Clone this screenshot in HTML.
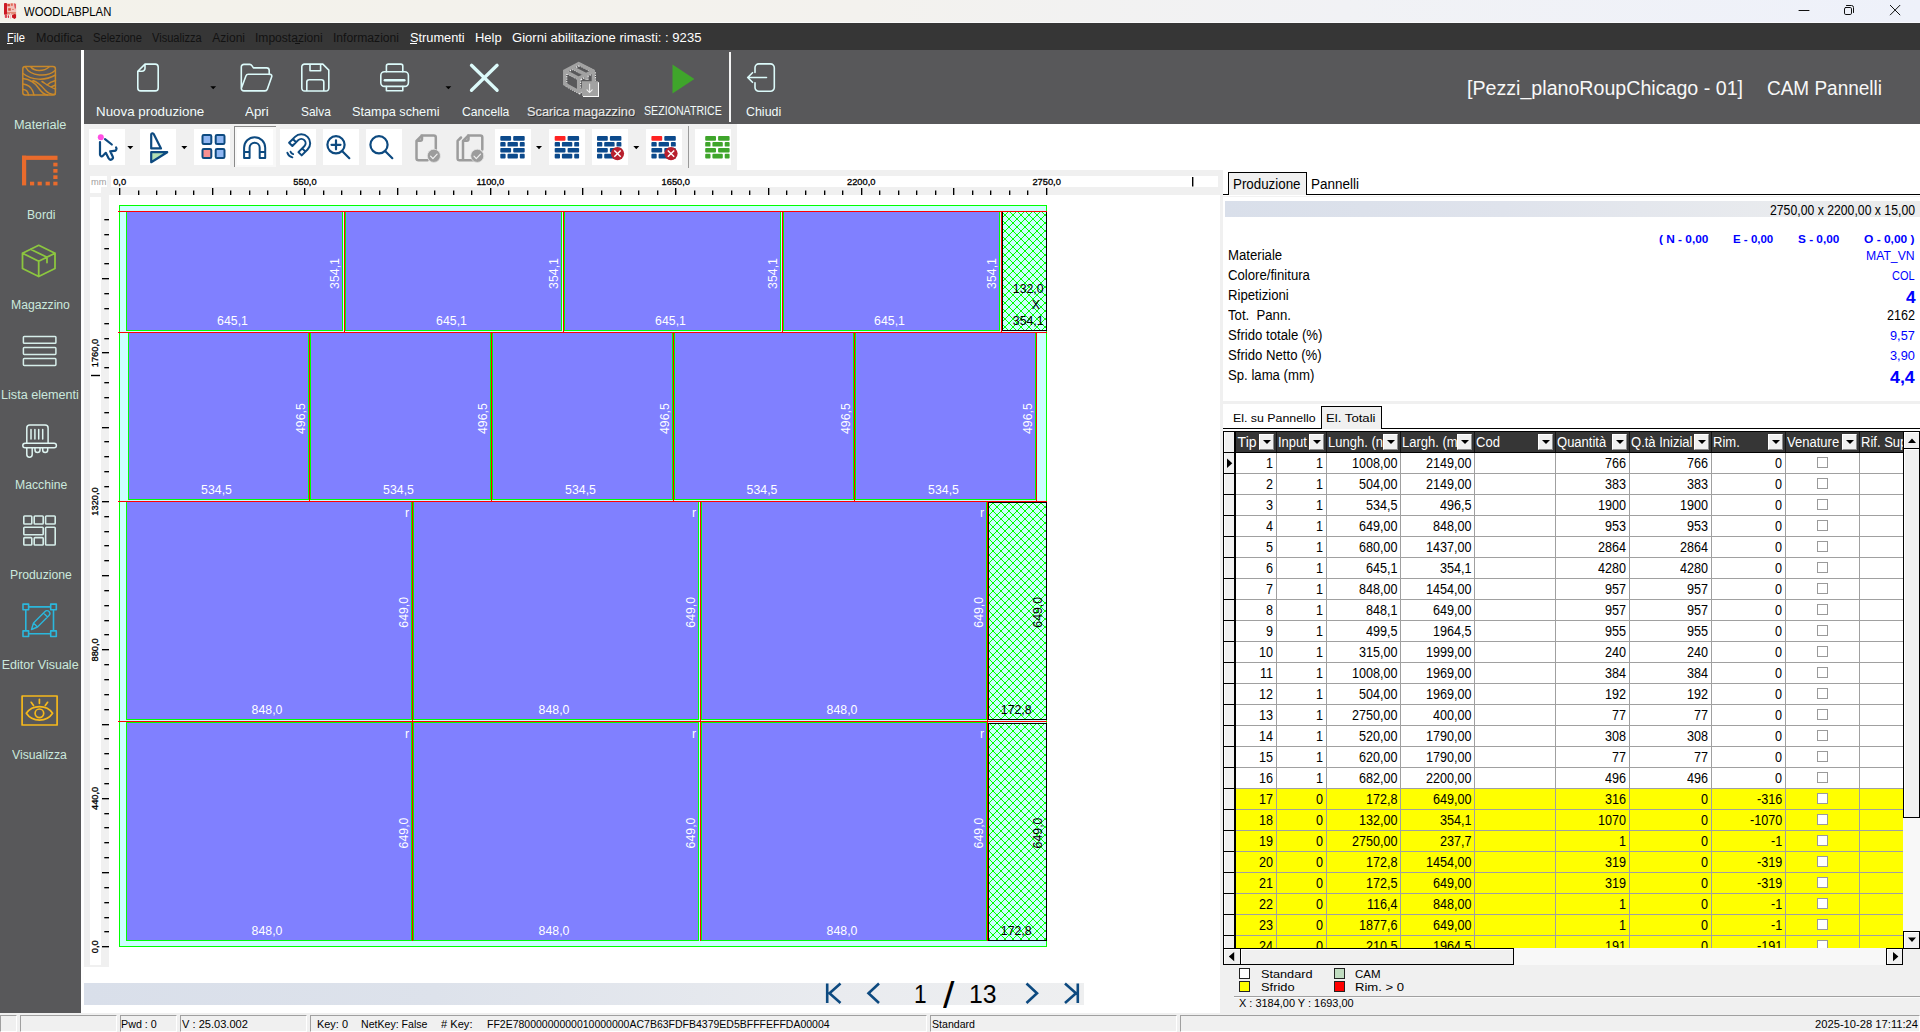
<!DOCTYPE html>
<html lang="it"><head><meta charset="utf-8"><title>WOODLABPLAN</title>
<style>
html,body{margin:0;padding:0;background:#fff;}
body{width:1920px;height:1032px;overflow:hidden;position:relative;font-family:"Liberation Sans",sans-serif;}
.r{position:absolute;}
.t{position:absolute;white-space:pre;transform-origin:0 50%;}
.ov{position:absolute;left:0;top:0;overflow:visible;}
.db{position:absolute;width:15px;height:16px;background:#f0f0f0;box-sizing:border-box;border-left:1px solid #fff;border-top:1px solid #fff;border-right:1px solid #8c8c8c;border-bottom:1px solid #8c8c8c;}
.db:after{content:"";position:absolute;left:2.6px;top:5px;border-left:4px solid transparent;border-right:4px solid transparent;border-top:4.4px solid #000;}
.cb{position:absolute;width:11px;height:11px;background:#fff;border:1px solid #9a9a9a;box-sizing:border-box;}
</style></head>
<body>
<div class="r" style="left:0px;top:0px;width:1920px;height:23px;background:linear-gradient(90deg,#f3f2ea 0%,#f3f2ee 45%,#f1f2f5 70%,#eef1fa 100%);"></div>
<div class="r" style="left:0px;top:22px;width:1920px;height:1px;background:linear-gradient(90deg,#fbfbf7,#f8f9fd);"></div>
<span class="t" style="left:24.00px;top:6px;font-size:12.0px;line-height:12.0px;color:#000;transform:scaleX(0.9418);">WOODLABPLAN</span>
<div class="r" style="left:0px;top:23px;width:1920px;height:27px;background:#363636;"></div>
<span class="t" style="left:7.30px;top:32px;font-size:12.0px;line-height:12.0px;color:#ffffff;transform:scaleX(0.9309);">File</span>
<span class="t" style="left:36.00px;top:32px;font-size:12.0px;line-height:12.0px;color:#121212;transform:scaleX(1.0451);">Modifica</span>
<span class="t" style="left:93.30px;top:32px;font-size:12.0px;line-height:12.0px;color:#121212;transform:scaleX(0.9297);">Selezione</span>
<span class="t" style="left:152.00px;top:32px;font-size:12.0px;line-height:12.0px;color:#121212;transform:scaleX(0.9236);">Visualizza</span>
<span class="t" style="left:212.30px;top:32px;font-size:12.0px;line-height:12.0px;color:#121212;">Azioni</span>
<span class="t" style="left:255.00px;top:32px;font-size:12.0px;line-height:12.0px;color:#121212;transform:scaleX(1.0049);">Impostazioni</span>
<span class="t" style="left:333.30px;top:32px;font-size:12.0px;line-height:12.0px;color:#121212;transform:scaleX(1.0097);">Informazioni</span>
<span class="t" style="left:410.00px;top:32px;font-size:12.0px;line-height:12.0px;color:#ffffff;transform:scaleX(1.0652);">Strumenti</span>
<span class="t" style="left:475.00px;top:32px;font-size:12.0px;line-height:12.0px;color:#ffffff;transform:scaleX(1.0818);">Help</span>
<span class="t" style="left:512.30px;top:32px;font-size:12.0px;line-height:12.0px;color:#ffffff;transform:scaleX(1.0880);">Giorni abilitazione rimasti: : 9235</span>
<div class="r" style="left:7px;top:43px;width:6px;height:1px;background:#ffffff;"></div>
<div class="r" style="left:410px;top:43px;width:7px;height:1px;background:#ffffff;"></div>
<div class="r" style="left:294.5px;top:43px;width:5px;height:1px;background:#121212;"></div>
<div class="r" style="left:0px;top:50px;width:81px;height:963px;background:#58585a;"></div>
<div class="r" style="left:84px;top:50px;width:1836px;height:73.5px;background:#58585a;"></div>
<span class="t" style="left:14.30px;top:119px;font-size:12.5px;line-height:12.5px;color:#cbe9dd;transform:scaleX(1.0192);">Materiale</span>
<span class="t" style="left:26.50px;top:209px;font-size:12.5px;line-height:12.5px;color:#cbe9dd;transform:scaleX(0.9732);">Bordi</span>
<span class="t" style="left:10.80px;top:299px;font-size:12.5px;line-height:12.5px;color:#cbe9dd;transform:scaleX(0.9743);">Magazzino</span>
<span class="t" style="left:1.40px;top:389px;font-size:12.5px;line-height:12.5px;color:#cbe9dd;transform:scaleX(1.0100);">Lista elementi</span>
<span class="t" style="left:14.50px;top:479px;font-size:12.5px;line-height:12.5px;color:#cbe9dd;transform:scaleX(0.9757);">Macchine</span>
<span class="t" style="left:9.60px;top:569px;font-size:12.5px;line-height:12.5px;color:#cbe9dd;transform:scaleX(0.9788);">Produzione</span>
<span class="t" style="left:1.70px;top:659px;font-size:12.5px;line-height:12.5px;color:#cbe9dd;">Editor Visuale</span>
<span class="t" style="left:12.20px;top:749px;font-size:12.5px;line-height:12.5px;color:#cbe9dd;transform:scaleX(0.9795);">Visualizza</span>
<span class="t" style="left:95.50px;top:105px;font-size:13.0px;line-height:13.0px;color:#f2fbfb;transform:scaleX(1.0263);">Nuova produzione</span>
<span class="t" style="left:244.50px;top:105px;font-size:13.0px;line-height:13.0px;color:#f2fbfb;transform:scaleX(1.0251);">Apri</span>
<span class="t" style="left:301.30px;top:105px;font-size:13.0px;line-height:13.0px;color:#f2fbfb;transform:scaleX(0.9164);">Salva</span>
<span class="t" style="left:351.50px;top:105px;font-size:13.0px;line-height:13.0px;color:#f2fbfb;transform:scaleX(0.9778);">Stampa schemi</span>
<span class="t" style="left:461.60px;top:105px;font-size:13.0px;line-height:13.0px;color:#f2fbfb;transform:scaleX(0.9370);">Cancella</span>
<span class="t" style="left:745.80px;top:105px;font-size:13.0px;line-height:13.0px;color:#f2fbfb;transform:scaleX(0.9551);">Chiudi</span>
<span class="t" style="left:526.60px;top:105px;font-size:13.0px;line-height:13.0px;color:#e6e6e6;transform:scaleX(0.9833);text-shadow:1px 1px 0 #2e2e2e;-webkit-text-stroke:.2px #e6e6e6;">Scarica magazzino</span>
<span class="t" style="left:644.20px;top:105px;font-size:12.5px;line-height:12.5px;color:#f2fbfb;transform:scaleX(0.8508);">SEZIONATRICE</span>
<div class="r" style="left:729px;top:52px;width:2px;height:70px;background:#f4f4f4;"></div>
<span class="t" style="left:1467.00px;top:78px;font-size:20.0px;line-height:20.0px;color:#f8f8f8;transform:scaleX(0.9812);">[Pezzi_planoRoupChicago - 01]</span>
<span class="t" style="left:1766.70px;top:78px;font-size:20.0px;line-height:20.0px;color:#f8f8f8;transform:scaleX(0.9491);">CAM Pannelli</span>
<div class="r" style="left:84px;top:124px;width:653px;height:46px;background:#f0f0f0;"></div>
<div class="r" style="left:234px;top:126px;width:42px;height:41px;background:#f8f8f8;border-left:1px solid #8a8a8a;border-top:1px solid #8a8a8a;box-sizing:border-box;"></div>
<div class="r" style="left:89px;top:129px;width:36px;height:36px;background:#ffffff;"></div>
<div class="r" style="left:140px;top:129px;width:36px;height:36px;background:#ffffff;"></div>
<div class="r" style="left:194px;top:129px;width:36px;height:36px;background:#ffffff;"></div>
<div class="r" style="left:237px;top:129px;width:36px;height:36px;background:#ffffff;"></div>
<div class="r" style="left:280px;top:129px;width:36px;height:36px;background:#ffffff;"></div>
<div class="r" style="left:323px;top:129px;width:36px;height:36px;background:#ffffff;"></div>
<div class="r" style="left:366px;top:129px;width:36px;height:36px;background:#ffffff;"></div>
<div class="r" style="left:495px;top:129px;width:36px;height:36px;background:#ffffff;"></div>
<div class="r" style="left:549px;top:129px;width:36px;height:36px;background:#ffffff;"></div>
<div class="r" style="left:592px;top:129px;width:36px;height:36px;background:#ffffff;"></div>
<div class="r" style="left:646px;top:129px;width:36px;height:36px;background:#ffffff;"></div>
<div class="r" style="left:695px;top:129px;width:36px;height:36px;background:#ffffff;"></div>
<div class="r" style="left:688px;top:126px;width:1px;height:42px;background:#9a9a9a;"></div>
<svg class="ov" style="left:84px;top:170px" width="1139" height="843" viewBox="84 170 1139 843" font-family="'Liberation Sans',sans-serif">
<defs><pattern id="hx" width="8" height="8" patternUnits="userSpaceOnUse" x="1" y="7"><rect width="8" height="8" fill="#ccffff"/><g fill="#00ff00" shape-rendering="crispEdges"><rect x="0" y="0" width="1" height="1"/><rect x="0" y="7" width="1" height="1"/><rect x="1" y="1" width="1" height="1"/><rect x="1" y="6" width="1" height="1"/><rect x="2" y="2" width="1" height="1"/><rect x="2" y="5" width="1" height="1"/><rect x="3" y="3" width="1" height="1"/><rect x="3" y="4" width="1" height="1"/><rect x="4" y="4" width="1" height="1"/><rect x="4" y="3" width="1" height="1"/><rect x="5" y="5" width="1" height="1"/><rect x="5" y="2" width="1" height="1"/><rect x="6" y="6" width="1" height="1"/><rect x="6" y="1" width="1" height="1"/><rect x="7" y="7" width="1" height="1"/><rect x="7" y="0" width="1" height="1"/></g></pattern><pattern id="hy" width="8" height="8" patternUnits="userSpaceOnUse" x="1" y="3"><rect width="8" height="8" fill="#ccffff"/><g fill="#00ff00" shape-rendering="crispEdges"><rect x="0" y="0" width="1" height="1"/><rect x="0" y="7" width="1" height="1"/><rect x="1" y="1" width="1" height="1"/><rect x="1" y="6" width="1" height="1"/><rect x="2" y="2" width="1" height="1"/><rect x="2" y="5" width="1" height="1"/><rect x="3" y="3" width="1" height="1"/><rect x="3" y="4" width="1" height="1"/><rect x="4" y="4" width="1" height="1"/><rect x="4" y="3" width="1" height="1"/><rect x="5" y="5" width="1" height="1"/><rect x="5" y="2" width="1" height="1"/><rect x="6" y="6" width="1" height="1"/><rect x="6" y="1" width="1" height="1"/><rect x="7" y="7" width="1" height="1"/><rect x="7" y="0" width="1" height="1"/></g></pattern></defs>
<g shape-rendering="crispEdges">
<rect x="84" y="170" width="1138.5" height="25" fill="#f0f0f0"/>
<rect x="84" y="195" width="25" height="772" fill="#f0f0f0"/>
<rect x="1220" y="195" width="3" height="818" fill="#f0f0f0"/>
<rect x="90" y="176" width="17" height="11" fill="#fff"/><rect x="90" y="187" width="11" height="6" fill="#fff"/>
<rect x="111" y="176" width="1107" height="11" fill="#fff"/>
<rect x="90" y="197" width="11" height="768" fill="#fff"/>
</g><g>
<rect x="119" y="188" width="1.35" height="7" fill="#000"/>
<rect x="138" y="190.5" width="1.35" height="4.5" fill="#000"/>
<rect x="156" y="190.5" width="1.35" height="4.5" fill="#000"/>
<rect x="175" y="190.5" width="1.35" height="4.5" fill="#000"/>
<rect x="193" y="190.5" width="1.35" height="4.5" fill="#000"/>
<rect x="212" y="188" width="1.35" height="7" fill="#000"/>
<rect x="230" y="190.5" width="1.35" height="4.5" fill="#000"/>
<rect x="249" y="190.5" width="1.35" height="4.5" fill="#000"/>
<rect x="267" y="190.5" width="1.35" height="4.5" fill="#000"/>
<rect x="286" y="190.5" width="1.35" height="4.5" fill="#000"/>
<rect x="304" y="188" width="1.35" height="7" fill="#000"/>
<rect x="323" y="190.5" width="1.35" height="4.5" fill="#000"/>
<rect x="341" y="190.5" width="1.35" height="4.5" fill="#000"/>
<rect x="360" y="190.5" width="1.35" height="4.5" fill="#000"/>
<rect x="379" y="190.5" width="1.35" height="4.5" fill="#000"/>
<rect x="397" y="188" width="1.35" height="7" fill="#000"/>
<rect x="416" y="190.5" width="1.35" height="4.5" fill="#000"/>
<rect x="434" y="190.5" width="1.35" height="4.5" fill="#000"/>
<rect x="453" y="190.5" width="1.35" height="4.5" fill="#000"/>
<rect x="471" y="190.5" width="1.35" height="4.5" fill="#000"/>
<rect x="490" y="188" width="1.35" height="7" fill="#000"/>
<rect x="508" y="190.5" width="1.35" height="4.5" fill="#000"/>
<rect x="527" y="190.5" width="1.35" height="4.5" fill="#000"/>
<rect x="545" y="190.5" width="1.35" height="4.5" fill="#000"/>
<rect x="564" y="190.5" width="1.35" height="4.5" fill="#000"/>
<rect x="582" y="188" width="1.35" height="7" fill="#000"/>
<rect x="601" y="190.5" width="1.35" height="4.5" fill="#000"/>
<rect x="620" y="190.5" width="1.35" height="4.5" fill="#000"/>
<rect x="638" y="190.5" width="1.35" height="4.5" fill="#000"/>
<rect x="657" y="190.5" width="1.35" height="4.5" fill="#000"/>
<rect x="675" y="188" width="1.35" height="7" fill="#000"/>
<rect x="694" y="190.5" width="1.35" height="4.5" fill="#000"/>
<rect x="712" y="190.5" width="1.35" height="4.5" fill="#000"/>
<rect x="731" y="190.5" width="1.35" height="4.5" fill="#000"/>
<rect x="749" y="190.5" width="1.35" height="4.5" fill="#000"/>
<rect x="768" y="188" width="1.35" height="7" fill="#000"/>
<rect x="786" y="190.5" width="1.35" height="4.5" fill="#000"/>
<rect x="805" y="190.5" width="1.35" height="4.5" fill="#000"/>
<rect x="824" y="190.5" width="1.35" height="4.5" fill="#000"/>
<rect x="842" y="190.5" width="1.35" height="4.5" fill="#000"/>
<rect x="861" y="188" width="1.35" height="7" fill="#000"/>
<rect x="879" y="190.5" width="1.35" height="4.5" fill="#000"/>
<rect x="898" y="190.5" width="1.35" height="4.5" fill="#000"/>
<rect x="916" y="190.5" width="1.35" height="4.5" fill="#000"/>
<rect x="935" y="190.5" width="1.35" height="4.5" fill="#000"/>
<rect x="953" y="188" width="1.35" height="7" fill="#000"/>
<rect x="972" y="190.5" width="1.35" height="4.5" fill="#000"/>
<rect x="990" y="190.5" width="1.35" height="4.5" fill="#000"/>
<rect x="1009" y="190.5" width="1.35" height="4.5" fill="#000"/>
<rect x="1027" y="190.5" width="1.35" height="4.5" fill="#000"/>
<rect x="1046" y="188" width="1.35" height="7" fill="#000"/>
<rect x="102" y="946" width="7" height="1.35" fill="#000"/>
<rect x="104.3" y="931" width="4.7" height="1.35" fill="#000"/>
<rect x="104.3" y="917" width="4.7" height="1.35" fill="#000"/>
<rect x="104.3" y="902" width="4.7" height="1.35" fill="#000"/>
<rect x="104.3" y="887" width="4.7" height="1.35" fill="#000"/>
<rect x="102" y="872" width="7" height="1.35" fill="#000"/>
<rect x="104.3" y="857" width="4.7" height="1.35" fill="#000"/>
<rect x="104.3" y="842" width="4.7" height="1.35" fill="#000"/>
<rect x="104.3" y="827" width="4.7" height="1.35" fill="#000"/>
<rect x="104.3" y="813" width="4.7" height="1.35" fill="#000"/>
<rect x="102" y="798" width="7" height="1.35" fill="#000"/>
<rect x="104.3" y="783" width="4.7" height="1.35" fill="#000"/>
<rect x="104.3" y="768" width="4.7" height="1.35" fill="#000"/>
<rect x="104.3" y="753" width="4.7" height="1.35" fill="#000"/>
<rect x="104.3" y="738" width="4.7" height="1.35" fill="#000"/>
<rect x="102" y="724" width="7" height="1.35" fill="#000"/>
<rect x="104.3" y="709" width="4.7" height="1.35" fill="#000"/>
<rect x="104.3" y="694" width="4.7" height="1.35" fill="#000"/>
<rect x="104.3" y="679" width="4.7" height="1.35" fill="#000"/>
<rect x="104.3" y="664" width="4.7" height="1.35" fill="#000"/>
<rect x="102" y="649" width="7" height="1.35" fill="#000"/>
<rect x="104.3" y="634" width="4.7" height="1.35" fill="#000"/>
<rect x="104.3" y="620" width="4.7" height="1.35" fill="#000"/>
<rect x="104.3" y="605" width="4.7" height="1.35" fill="#000"/>
<rect x="104.3" y="590" width="4.7" height="1.35" fill="#000"/>
<rect x="102" y="575" width="7" height="1.35" fill="#000"/>
<rect x="104.3" y="560" width="4.7" height="1.35" fill="#000"/>
<rect x="104.3" y="545" width="4.7" height="1.35" fill="#000"/>
<rect x="104.3" y="531" width="4.7" height="1.35" fill="#000"/>
<rect x="104.3" y="516" width="4.7" height="1.35" fill="#000"/>
<rect x="102" y="501" width="7" height="1.35" fill="#000"/>
<rect x="104.3" y="486" width="4.7" height="1.35" fill="#000"/>
<rect x="104.3" y="471" width="4.7" height="1.35" fill="#000"/>
<rect x="104.3" y="456" width="4.7" height="1.35" fill="#000"/>
<rect x="104.3" y="441" width="4.7" height="1.35" fill="#000"/>
<rect x="102" y="427" width="7" height="1.35" fill="#000"/>
<rect x="104.3" y="412" width="4.7" height="1.35" fill="#000"/>
<rect x="104.3" y="397" width="4.7" height="1.35" fill="#000"/>
<rect x="104.3" y="382" width="4.7" height="1.35" fill="#000"/>
<rect x="104.3" y="367" width="4.7" height="1.35" fill="#000"/>
<rect x="102" y="352" width="7" height="1.35" fill="#000"/>
<rect x="104.3" y="338" width="4.7" height="1.35" fill="#000"/>
<rect x="104.3" y="323" width="4.7" height="1.35" fill="#000"/>
<rect x="104.3" y="308" width="4.7" height="1.35" fill="#000"/>
<rect x="104.3" y="293" width="4.7" height="1.35" fill="#000"/>
<rect x="102" y="278" width="7" height="1.35" fill="#000"/>
<rect x="104.3" y="263" width="4.7" height="1.35" fill="#000"/>
<rect x="104.3" y="248" width="4.7" height="1.35" fill="#000"/>
<rect x="104.3" y="234" width="4.7" height="1.35" fill="#000"/>
<rect x="104.3" y="219" width="4.7" height="1.35" fill="#000"/>
<rect x="1192" y="177" width="1.4" height="9.5" fill="#000"/>
<rect x="91" y="374.8" width="9" height="1.4" fill="#000"/>
</g><g shape-rendering="crispEdges">
<rect x="119.5" y="205.5" width="927" height="741" fill="#ccffff" stroke="#00ff00"/>
<rect x="126.5" y="211.5" width="216" height="119" fill="#8080ff" stroke="#00ff00"/>
<rect x="345.5" y="211.5" width="216" height="119" fill="#8080ff" stroke="#00ff00"/>
<rect x="564.5" y="211.5" width="216" height="119" fill="#8080ff" stroke="#00ff00"/>
<rect x="783.5" y="211.5" width="216" height="119" fill="#8080ff" stroke="#00ff00"/>
<rect x="1002.5" y="211.5" width="44" height="119" fill="url(#hy)" stroke="#000"/>
<rect x="128.5" y="332.5" width="180" height="167" fill="#8080ff" stroke="#00ff00"/>
<rect x="310.5" y="332.5" width="180" height="167" fill="#8080ff" stroke="#00ff00"/>
<rect x="492.5" y="332.5" width="180" height="167" fill="#8080ff" stroke="#00ff00"/>
<rect x="674.5" y="332.5" width="179" height="167" fill="#8080ff" stroke="#00ff00"/>
<rect x="855.5" y="332.5" width="180" height="167" fill="#8080ff" stroke="#00ff00"/>
<rect x="126.5" y="501.5" width="285" height="218" fill="#8080ff" stroke="#00ff00"/>
<rect x="413.5" y="501.5" width="285" height="218" fill="#8080ff" stroke="#00ff00"/>
<rect x="701.5" y="501.5" width="285" height="218" fill="#8080ff" stroke="#00ff00"/>
<rect x="988.5" y="502.5" width="58" height="217" fill="url(#hx)" stroke="#000"/>
<rect x="126.5" y="722.5" width="285" height="218" fill="#8080ff" stroke="#00ff00"/>
<rect x="413.5" y="722.5" width="285" height="218" fill="#8080ff" stroke="#00ff00"/>
<rect x="701.5" y="722.5" width="285" height="218" fill="#8080ff" stroke="#00ff00"/>
<rect x="988.5" y="723.5" width="58" height="217" fill="url(#hx)" stroke="#000"/>
<rect x="118" y="211" width="929" height="1" fill="#ff0000"/>
<rect x="118" y="332" width="929" height="1" fill="#ff0000"/>
<rect x="118" y="501" width="929" height="1" fill="#ff0000"/>
<rect x="118" y="721" width="929" height="1" fill="#ff0000"/>
<rect x="344" y="211" width="1" height="121" fill="#ff0000"/>
<rect x="563" y="211" width="1" height="121" fill="#ff0000"/>
<rect x="782" y="211" width="1" height="121" fill="#ff0000"/>
<rect x="1001" y="211" width="1" height="121" fill="#ff0000"/>
<rect x="309" y="332" width="1" height="169" fill="#ff0000"/>
<rect x="491" y="332" width="1" height="169" fill="#ff0000"/>
<rect x="673" y="332" width="1" height="169" fill="#ff0000"/>
<rect x="854" y="332" width="1" height="169" fill="#ff0000"/>
<rect x="1036" y="332" width="1" height="169" fill="#ff0000"/>
<rect x="412" y="501" width="1" height="220" fill="#ff0000"/>
<rect x="412" y="721" width="1" height="220" fill="#ff0000"/>
<rect x="700" y="501" width="1" height="220" fill="#ff0000"/>
<rect x="700" y="721" width="1" height="220" fill="#ff0000"/>
<rect x="987" y="501" width="1" height="220" fill="#ff0000"/>
<rect x="987" y="721" width="1" height="220" fill="#ff0000"/>
</g>
<text stroke="#000" stroke-width=".3" x="119.60" y="184.50" font-size="9.30" fill="#000" text-anchor="middle">0,0</text>
<text stroke="#000" stroke-width=".3" x="305.00" y="184.50" font-size="9.30" fill="#000" text-anchor="middle">550,0</text>
<text stroke="#000" stroke-width=".3" x="490.40" y="184.50" font-size="9.30" fill="#000" text-anchor="middle">1100,0</text>
<text stroke="#000" stroke-width=".3" x="675.80" y="184.50" font-size="9.30" fill="#000" text-anchor="middle">1650,0</text>
<text stroke="#000" stroke-width=".3" x="861.20" y="184.50" font-size="9.30" fill="#000" text-anchor="middle">2200,0</text>
<text stroke="#000" stroke-width=".3" x="1046.60" y="184.50" font-size="9.30" fill="#000" text-anchor="middle">2750,0</text>
<text x="91.00" y="184.80" font-size="9.30" fill="#a0a0a0" text-anchor="start" textLength="15.50" lengthAdjust="spacingAndGlyphs">mm</text>
<text stroke="#000" stroke-width=".3" transform="translate(98.40 946.80) rotate(-90)" font-size="9.30" fill="#000" text-anchor="middle">0,0</text>
<text stroke="#000" stroke-width=".3" transform="translate(98.40 798.35) rotate(-90)" font-size="9.30" fill="#000" text-anchor="middle">440,0</text>
<text stroke="#000" stroke-width=".3" transform="translate(98.40 649.90) rotate(-90)" font-size="9.30" fill="#000" text-anchor="middle">880,0</text>
<text stroke="#000" stroke-width=".3" transform="translate(98.40 501.45) rotate(-90)" font-size="9.30" fill="#000" text-anchor="middle">1320,0</text>
<text stroke="#000" stroke-width=".3" transform="translate(98.40 353.00) rotate(-90)" font-size="9.30" fill="#000" text-anchor="middle">1760,0</text>
<text x="232.50" y="325.00" font-size="12.30" fill="#fff" text-anchor="middle">645,1</text>
<text transform="translate(339.00 273.50) rotate(-90)" font-size="12.30" fill="#fff" text-anchor="middle">354,1</text>
<text x="451.50" y="325.00" font-size="12.30" fill="#fff" text-anchor="middle">645,1</text>
<text transform="translate(558.00 273.50) rotate(-90)" font-size="12.30" fill="#fff" text-anchor="middle">354,1</text>
<text x="670.50" y="325.00" font-size="12.30" fill="#fff" text-anchor="middle">645,1</text>
<text transform="translate(777.00 273.50) rotate(-90)" font-size="12.30" fill="#fff" text-anchor="middle">354,1</text>
<text x="889.50" y="325.00" font-size="12.30" fill="#fff" text-anchor="middle">645,1</text>
<text transform="translate(996.00 273.50) rotate(-90)" font-size="12.30" fill="#fff" text-anchor="middle">354,1</text>
<text x="216.50" y="494.00" font-size="12.30" fill="#fff" text-anchor="middle">534,5</text>
<text transform="translate(305.00 418.60) rotate(-90)" font-size="12.30" fill="#fff" text-anchor="middle">496,5</text>
<text x="398.50" y="494.00" font-size="12.30" fill="#fff" text-anchor="middle">534,5</text>
<text transform="translate(487.00 418.60) rotate(-90)" font-size="12.30" fill="#fff" text-anchor="middle">496,5</text>
<text x="580.50" y="494.00" font-size="12.30" fill="#fff" text-anchor="middle">534,5</text>
<text transform="translate(669.00 418.60) rotate(-90)" font-size="12.30" fill="#fff" text-anchor="middle">496,5</text>
<text x="762.00" y="494.00" font-size="12.30" fill="#fff" text-anchor="middle">534,5</text>
<text transform="translate(850.00 418.60) rotate(-90)" font-size="12.30" fill="#fff" text-anchor="middle">496,5</text>
<text x="943.50" y="494.00" font-size="12.30" fill="#fff" text-anchor="middle">534,5</text>
<text transform="translate(1032.00 418.60) rotate(-90)" font-size="12.30" fill="#fff" text-anchor="middle">496,5</text>
<text x="267.00" y="714.00" font-size="12.30" fill="#fff" text-anchor="middle">848,0</text>
<text transform="translate(407.50 612.30) rotate(-90)" font-size="12.30" fill="#fff" text-anchor="middle">649,0</text>
<text x="409.00" y="517.00" font-size="12.30" fill="#fff" text-anchor="end">r</text>
<text x="554.00" y="714.00" font-size="12.30" fill="#fff" text-anchor="middle">848,0</text>
<text transform="translate(694.50 612.30) rotate(-90)" font-size="12.30" fill="#fff" text-anchor="middle">649,0</text>
<text x="696.00" y="517.00" font-size="12.30" fill="#fff" text-anchor="end">r</text>
<text x="842.00" y="714.00" font-size="12.30" fill="#fff" text-anchor="middle">848,0</text>
<text transform="translate(982.50 612.30) rotate(-90)" font-size="12.30" fill="#fff" text-anchor="middle">649,0</text>
<text x="984.00" y="517.00" font-size="12.30" fill="#fff" text-anchor="end">r</text>
<text x="1016.20" y="714.00" font-size="12.30" fill="#000" text-anchor="middle">172,8</text>
<text transform="translate(1042.00 612.30) rotate(-90)" font-size="12.30" fill="#000" text-anchor="middle">649,0</text>
<text x="267.00" y="935.00" font-size="12.30" fill="#fff" text-anchor="middle">848,0</text>
<text transform="translate(407.50 833.00) rotate(-90)" font-size="12.30" fill="#fff" text-anchor="middle">649,0</text>
<text x="409.00" y="738.00" font-size="12.30" fill="#fff" text-anchor="end">r</text>
<text x="554.00" y="935.00" font-size="12.30" fill="#fff" text-anchor="middle">848,0</text>
<text transform="translate(694.50 833.00) rotate(-90)" font-size="12.30" fill="#fff" text-anchor="middle">649,0</text>
<text x="696.00" y="738.00" font-size="12.30" fill="#fff" text-anchor="end">r</text>
<text x="842.00" y="935.00" font-size="12.30" fill="#fff" text-anchor="middle">848,0</text>
<text transform="translate(982.50 833.00) rotate(-90)" font-size="12.30" fill="#fff" text-anchor="middle">649,0</text>
<text x="984.00" y="738.00" font-size="12.30" fill="#fff" text-anchor="end">r</text>
<text x="1016.20" y="935.00" font-size="12.30" fill="#000" text-anchor="middle">172,8</text>
<text transform="translate(1042.00 833.00) rotate(-90)" font-size="12.30" fill="#000" text-anchor="middle">649,0</text>
<text x="1043.60" y="293.00" font-size="12.30" fill="#000" text-anchor="end">132,0</text>
<text x="1040.00" y="309.00" font-size="12.30" fill="#000" text-anchor="end">X</text>
<text x="1043.60" y="325.00" font-size="12.30" fill="#000" text-anchor="end">354,1</text>
</svg>
<div class="r" style="left:84px;top:983px;width:1000px;height:22px;background:linear-gradient(90deg,#d9dfea 0%,#dde2eb 35%,#e9ebef 75%,#eeeff0 100%);"></div>
<span class="t" style="left:914.20px;top:982px;font-size:25.6px;line-height:25.6px;color:#000;transform:scaleX(0.8850);">1</span>
<span class="t" style="left:943.00px;top:977px;font-size:37.0px;line-height:37.0px;color:#000;transform:scaleX(1.1091);">/</span>
<span class="t" style="left:969.20px;top:982px;font-size:25.6px;line-height:25.6px;color:#000;transform:scaleX(0.9692);">13</span>
<svg class="ov" style="left:820px;top:978px" width="270" height="32" fill="none" stroke="#0d4a80" stroke-width="2.600"><path d="M7.200 5.500v19.500M20.500 5.500L9.500 15.200L20.500 25M59 5.500L48.500 15.200L59 25M206.500 5.500L217 15.200L206.500 25M245 5.500L256 15.200L245 25M257.800 5.500v19.500"/></svg>
<div class="r" style="left:1223px;top:193.5px;width:697px;height:1.5px;background:#000;"></div>
<div class="r" style="left:1228px;top:172px;width:79px;height:23px;background:#f0f0f0;border:1px solid #000;border-bottom:none;box-sizing:border-box;"></div>
<div class="r" style="left:1223px;top:193.5px;width:6px;height:1.5px;background:#000;"></div>
<span class="t" style="left:1232.80px;top:177px;font-size:14.0px;line-height:14.0px;color:#000;transform:scaleX(0.9530);">Produzione</span>
<span class="t" style="left:1310.80px;top:177px;font-size:14.0px;line-height:14.0px;color:#000;transform:scaleX(0.9635);">Pannelli</span>
<div class="r" style="left:1223px;top:196px;width:697px;height:1px;background:#f2f2f2;"></div>
<div class="r" style="left:1225px;top:201px;width:695px;height:16px;background:linear-gradient(90deg,#d9dfea 0%,#dfe3ec 40%,#e9ebee 80%,#ececec 100%);"></div>
<span class="t" style="left:1770.00px;top:203px;font-size:14.0px;line-height:14.0px;color:#000;transform:scaleX(0.8745);">2750,00 x 2200,00 x 15,00</span>
<span class="t" style="left:1659.40px;top:234px;font-size:11.2px;line-height:11.2px;color:#0000ff;font-weight:bold;transform:scaleX(1.0582);">( N - 0,00</span>
<span class="t" style="left:1733.40px;top:234px;font-size:11.2px;line-height:11.2px;color:#0000ff;font-weight:bold;transform:scaleX(1.0275);">E - 0,00</span>
<span class="t" style="left:1798.30px;top:234px;font-size:11.2px;line-height:11.2px;color:#0000ff;font-weight:bold;transform:scaleX(1.0530);">S - 0,00</span>
<span class="t" style="left:1864.20px;top:234px;font-size:11.2px;line-height:11.2px;color:#0000ff;font-weight:bold;transform:scaleX(1.0697);">O - 0,00 )</span>
<span class="t" style="left:1227.80px;top:248px;font-size:14.0px;line-height:14.0px;color:#000;transform:scaleX(0.9400);">Materiale</span>
<span class="t" style="left:1227.80px;top:268px;font-size:14.0px;line-height:14.0px;color:#000;transform:scaleX(0.9400);">Colore/finitura</span>
<span class="t" style="left:1227.80px;top:288px;font-size:14.0px;line-height:14.0px;color:#000;transform:scaleX(0.9400);">Ripetizioni</span>
<span class="t" style="left:1227.80px;top:308px;font-size:14.0px;line-height:14.0px;color:#000;transform:scaleX(0.9400);">Tot.  Pann.</span>
<span class="t" style="left:1227.80px;top:328px;font-size:14.0px;line-height:14.0px;color:#000;transform:scaleX(0.9400);">Sfrido totale (%)</span>
<span class="t" style="left:1227.80px;top:348px;font-size:14.0px;line-height:14.0px;color:#000;transform:scaleX(0.9400);">Sfrido Netto (%)</span>
<span class="t" style="left:1227.80px;top:368px;font-size:14.0px;line-height:14.0px;color:#000;transform:scaleX(0.9400);">Sp. lama (mm)</span>
<span class="t" style="left:1866.40px;top:250px;font-size:12.5px;line-height:12.5px;color:#0000ff;transform:scaleX(0.9764);">MAT_VN</span>
<span class="t" style="left:1892.40px;top:270px;font-size:12.5px;line-height:12.5px;color:#0000ff;transform:scaleX(0.8793);">COL</span>
<span class="t" style="left:1905.60px;top:290px;font-size:16.7px;line-height:16.7px;color:#0000ff;font-weight:bold;transform:scaleX(1.0336);">4</span>
<span class="t" style="left:1886.97px;top:308px;font-size:14.0px;line-height:14.0px;color:#000;transform:scaleX(0.9000);">2162</span>
<span class="t" style="left:1890.40px;top:330px;font-size:12.5px;line-height:12.5px;color:#0000ff;transform:scaleX(1.0194);">9,57</span>
<span class="t" style="left:1890.40px;top:350px;font-size:12.5px;line-height:12.5px;color:#0000ff;transform:scaleX(1.0194);">3,90</span>
<span class="t" style="left:1890.40px;top:370px;font-size:16.7px;line-height:16.7px;color:#0000ff;font-weight:bold;transform:scaleX(1.0682);">4,4</span>
<div class="r" style="left:1223px;top:401px;width:697px;height:3px;background:#f0f0f0;"></div>
<div class="r" style="left:1223px;top:427.5px;width:697px;height:1.5px;background:#000;"></div>
<div class="r" style="left:1321px;top:406px;width:61px;height:23px;background:#f0f0f0;border:1px solid #000;border-bottom:none;box-sizing:border-box;"></div>
<span class="t" style="left:1233.20px;top:413px;font-size:11.2px;line-height:11.2px;color:#000;transform:scaleX(1.1055);">El. su Pannello</span>
<span class="t" style="left:1326.20px;top:413px;font-size:11.2px;line-height:11.2px;color:#000;transform:scaleX(1.1774);">El. Totali</span>
<div class="r" style="left:1223px;top:431px;width:680px;height:517px;background:#fff;"></div>
<div class="r" style="left:1223px;top:431px;width:680px;height:1px;background:#000;"></div>
<div class="r" style="left:1223px;top:431px;width:1px;height:517px;background:#000;"></div>
<div class="r" style="left:1224px;top:432px;width:10px;height:516px;background:#f0f0f0;border-left:1px solid #fff;box-sizing:border-box;"></div>
<div class="r" style="left:1234px;top:432px;width:1.6px;height:516px;background:#000;"></div>
<div class="r" style="left:1235.6px;top:432px;width:667.4px;height:20px;background:#363636;"></div>
<div class="r" style="left:1237px;top:432px;width:22px;height:20px;overflow:hidden"><span class="t" style="left:0.60px;top:3px;font-size:14.0px;line-height:14.0px;color:#fff;">Tip</span></div>
<div class="db" style="left:1259px;top:434px"></div>
<div class="r" style="left:1276px;top:432px;width:1px;height:20px;background:#141414;"></div>
<div class="r" style="left:1278px;top:432px;width:31px;height:20px;overflow:hidden"><span class="t" style="left:0.30px;top:3px;font-size:14.0px;line-height:14.0px;color:#fff;transform:scaleX(0.9300);">Input</span></div>
<div class="db" style="left:1309px;top:434px"></div>
<div class="r" style="left:1326px;top:432px;width:1px;height:20px;background:#141414;"></div>
<div class="r" style="left:1328px;top:432px;width:55px;height:20px;overflow:hidden"><span class="t" style="left:0.30px;top:3px;font-size:14.0px;line-height:14.0px;color:#fff;transform:scaleX(0.9300);">Lungh. (n</span></div>
<div class="db" style="left:1383px;top:434px"></div>
<div class="r" style="left:1400px;top:432px;width:1px;height:20px;background:#141414;"></div>
<div class="r" style="left:1402px;top:432px;width:55px;height:20px;overflow:hidden"><span class="t" style="left:0.30px;top:3px;font-size:14.0px;line-height:14.0px;color:#fff;transform:scaleX(0.9300);">Largh. (m</span></div>
<div class="db" style="left:1457px;top:434px"></div>
<div class="r" style="left:1474px;top:432px;width:1px;height:20px;background:#141414;"></div>
<div class="r" style="left:1476px;top:432px;width:62px;height:20px;overflow:hidden"><span class="t" style="left:0.30px;top:3px;font-size:14.0px;line-height:14.0px;color:#fff;transform:scaleX(0.9300);">Cod</span></div>
<div class="db" style="left:1538px;top:434px"></div>
<div class="r" style="left:1555px;top:432px;width:1px;height:20px;background:#141414;"></div>
<div class="r" style="left:1557px;top:432px;width:55px;height:20px;overflow:hidden"><span class="t" style="left:0.30px;top:3px;font-size:14.0px;line-height:14.0px;color:#fff;transform:scaleX(0.9300);">Quantità</span></div>
<div class="db" style="left:1612px;top:434px"></div>
<div class="r" style="left:1629px;top:432px;width:1px;height:20px;background:#141414;"></div>
<div class="r" style="left:1631px;top:432px;width:63px;height:20px;overflow:hidden"><span class="t" style="left:0.30px;top:3px;font-size:14.0px;line-height:14.0px;color:#fff;transform:scaleX(0.9300);">Q.tà Inizial</span></div>
<div class="db" style="left:1694px;top:434px"></div>
<div class="r" style="left:1711px;top:432px;width:1px;height:20px;background:#141414;"></div>
<div class="r" style="left:1713px;top:432px;width:55px;height:20px;overflow:hidden"><span class="t" style="left:0.30px;top:3px;font-size:14.0px;line-height:14.0px;color:#fff;transform:scaleX(0.9300);">Rim.</span></div>
<div class="db" style="left:1768px;top:434px"></div>
<div class="r" style="left:1785px;top:432px;width:1px;height:20px;background:#141414;"></div>
<div class="r" style="left:1787px;top:432px;width:55px;height:20px;overflow:hidden"><span class="t" style="left:0.30px;top:3px;font-size:14.0px;line-height:14.0px;color:#fff;transform:scaleX(0.9300);">Venature</span></div>
<div class="db" style="left:1842px;top:434px"></div>
<div class="r" style="left:1859px;top:432px;width:1px;height:20px;background:#141414;"></div>
<div class="r" style="left:1861px;top:432px;width:42px;height:20px;overflow:hidden"><span class="t" style="left:0.30px;top:3px;font-size:14.0px;line-height:14.0px;color:#fff;transform:scaleX(0.9300);">Rif. Sup</span></div>
<div class="r" style="left:1235.6px;top:789px;width:667.4px;height:20px;background:#ffff00;"></div>
<div class="r" style="left:1235.6px;top:810px;width:667.4px;height:20px;background:#ffff00;"></div>
<div class="r" style="left:1235.6px;top:831px;width:667.4px;height:20px;background:#ffff00;"></div>
<div class="r" style="left:1235.6px;top:852px;width:667.4px;height:20px;background:#ffff00;"></div>
<div class="r" style="left:1235.6px;top:873px;width:667.4px;height:20px;background:#ffff00;"></div>
<div class="r" style="left:1235.6px;top:894px;width:667.4px;height:20px;background:#ffff00;"></div>
<div class="r" style="left:1235.6px;top:915px;width:667.4px;height:20px;background:#ffff00;"></div>
<div class="r" style="left:1235.6px;top:936px;width:667.4px;height:12px;background:#ffff00;"></div>
<div class="r" style="left:1223px;top:452px;width:680px;height:1px;background:#000;"></div>
<div class="r" style="left:1224px;top:473px;width:10px;height:1px;background:#000;"></div>
<div class="r" style="left:1235.6px;top:473px;width:667.4px;height:1px;background:#a0a0a0;"></div>
<div class="r" style="left:1224px;top:494px;width:10px;height:1px;background:#000;"></div>
<div class="r" style="left:1235.6px;top:494px;width:667.4px;height:1px;background:#a0a0a0;"></div>
<div class="r" style="left:1224px;top:515px;width:10px;height:1px;background:#000;"></div>
<div class="r" style="left:1235.6px;top:515px;width:667.4px;height:1px;background:#a0a0a0;"></div>
<div class="r" style="left:1224px;top:536px;width:10px;height:1px;background:#000;"></div>
<div class="r" style="left:1235.6px;top:536px;width:667.4px;height:1px;background:#a0a0a0;"></div>
<div class="r" style="left:1224px;top:557px;width:10px;height:1px;background:#000;"></div>
<div class="r" style="left:1235.6px;top:557px;width:667.4px;height:1px;background:#a0a0a0;"></div>
<div class="r" style="left:1224px;top:578px;width:10px;height:1px;background:#000;"></div>
<div class="r" style="left:1235.6px;top:578px;width:667.4px;height:1px;background:#a0a0a0;"></div>
<div class="r" style="left:1224px;top:599px;width:10px;height:1px;background:#000;"></div>
<div class="r" style="left:1235.6px;top:599px;width:667.4px;height:1px;background:#a0a0a0;"></div>
<div class="r" style="left:1224px;top:620px;width:10px;height:1px;background:#000;"></div>
<div class="r" style="left:1235.6px;top:620px;width:667.4px;height:1px;background:#a0a0a0;"></div>
<div class="r" style="left:1224px;top:641px;width:10px;height:1px;background:#000;"></div>
<div class="r" style="left:1235.6px;top:641px;width:667.4px;height:1px;background:#a0a0a0;"></div>
<div class="r" style="left:1224px;top:662px;width:10px;height:1px;background:#000;"></div>
<div class="r" style="left:1235.6px;top:662px;width:667.4px;height:1px;background:#a0a0a0;"></div>
<div class="r" style="left:1224px;top:683px;width:10px;height:1px;background:#000;"></div>
<div class="r" style="left:1235.6px;top:683px;width:667.4px;height:1px;background:#a0a0a0;"></div>
<div class="r" style="left:1224px;top:704px;width:10px;height:1px;background:#000;"></div>
<div class="r" style="left:1235.6px;top:704px;width:667.4px;height:1px;background:#a0a0a0;"></div>
<div class="r" style="left:1224px;top:725px;width:10px;height:1px;background:#000;"></div>
<div class="r" style="left:1235.6px;top:725px;width:667.4px;height:1px;background:#a0a0a0;"></div>
<div class="r" style="left:1224px;top:746px;width:10px;height:1px;background:#000;"></div>
<div class="r" style="left:1235.6px;top:746px;width:667.4px;height:1px;background:#a0a0a0;"></div>
<div class="r" style="left:1224px;top:767px;width:10px;height:1px;background:#000;"></div>
<div class="r" style="left:1235.6px;top:767px;width:667.4px;height:1px;background:#a0a0a0;"></div>
<div class="r" style="left:1224px;top:788px;width:10px;height:1px;background:#000;"></div>
<div class="r" style="left:1235.6px;top:788px;width:667.4px;height:1px;background:#a0a0a0;"></div>
<div class="r" style="left:1224px;top:809px;width:10px;height:1px;background:#000;"></div>
<div class="r" style="left:1235.6px;top:809px;width:667.4px;height:1px;background:#a0a0a0;"></div>
<div class="r" style="left:1224px;top:830px;width:10px;height:1px;background:#000;"></div>
<div class="r" style="left:1235.6px;top:830px;width:667.4px;height:1px;background:#a0a0a0;"></div>
<div class="r" style="left:1224px;top:851px;width:10px;height:1px;background:#000;"></div>
<div class="r" style="left:1235.6px;top:851px;width:667.4px;height:1px;background:#a0a0a0;"></div>
<div class="r" style="left:1224px;top:872px;width:10px;height:1px;background:#000;"></div>
<div class="r" style="left:1235.6px;top:872px;width:667.4px;height:1px;background:#a0a0a0;"></div>
<div class="r" style="left:1224px;top:893px;width:10px;height:1px;background:#000;"></div>
<div class="r" style="left:1235.6px;top:893px;width:667.4px;height:1px;background:#a0a0a0;"></div>
<div class="r" style="left:1224px;top:914px;width:10px;height:1px;background:#000;"></div>
<div class="r" style="left:1235.6px;top:914px;width:667.4px;height:1px;background:#a0a0a0;"></div>
<div class="r" style="left:1224px;top:935px;width:10px;height:1px;background:#000;"></div>
<div class="r" style="left:1235.6px;top:935px;width:667.4px;height:1px;background:#a0a0a0;"></div>
<div class="r" style="left:1276px;top:453px;width:1px;height:495px;background:#a0a0a0;"></div>
<div class="r" style="left:1326px;top:453px;width:1px;height:495px;background:#a0a0a0;"></div>
<div class="r" style="left:1400px;top:453px;width:1px;height:495px;background:#a0a0a0;"></div>
<div class="r" style="left:1474px;top:453px;width:1px;height:495px;background:#a0a0a0;"></div>
<div class="r" style="left:1555px;top:453px;width:1px;height:495px;background:#a0a0a0;"></div>
<div class="r" style="left:1629px;top:453px;width:1px;height:495px;background:#a0a0a0;"></div>
<div class="r" style="left:1711px;top:453px;width:1px;height:495px;background:#a0a0a0;"></div>
<div class="r" style="left:1785px;top:453px;width:1px;height:495px;background:#a0a0a0;"></div>
<div class="r" style="left:1859px;top:453px;width:1px;height:495px;background:#a0a0a0;"></div>
<div class="r" style="left:1235px;top:453px;width:668px;height:495px;overflow:hidden">
<span class="t" style="left:31.39px;top:3px;font-size:14.0px;line-height:14.0px;color:#000;transform:scaleX(0.9000);">1</span>
<span class="t" style="left:81.39px;top:3px;font-size:14.0px;line-height:14.0px;color:#000;transform:scaleX(0.9000);">1</span>
<span class="t" style="left:116.85px;top:3px;font-size:14.0px;line-height:14.0px;color:#000;transform:scaleX(0.9000);">1008,00</span>
<span class="t" style="left:190.85px;top:3px;font-size:14.0px;line-height:14.0px;color:#000;transform:scaleX(0.9000);">2149,00</span>
<span class="t" style="left:370.38px;top:3px;font-size:14.0px;line-height:14.0px;color:#000;transform:scaleX(0.9000);">766</span>
<span class="t" style="left:452.38px;top:3px;font-size:14.0px;line-height:14.0px;color:#000;transform:scaleX(0.9000);">766</span>
<span class="t" style="left:540.39px;top:3px;font-size:14.0px;line-height:14.0px;color:#000;transform:scaleX(0.9000);">0</span>
<div class="cb" style="left:582px;top:4px"></div>
<span class="t" style="left:31.39px;top:24px;font-size:14.0px;line-height:14.0px;color:#000;transform:scaleX(0.9000);">2</span>
<span class="t" style="left:81.39px;top:24px;font-size:14.0px;line-height:14.0px;color:#000;transform:scaleX(0.9000);">1</span>
<span class="t" style="left:123.86px;top:24px;font-size:14.0px;line-height:14.0px;color:#000;transform:scaleX(0.9000);">504,00</span>
<span class="t" style="left:190.85px;top:24px;font-size:14.0px;line-height:14.0px;color:#000;transform:scaleX(0.9000);">2149,00</span>
<span class="t" style="left:370.38px;top:24px;font-size:14.0px;line-height:14.0px;color:#000;transform:scaleX(0.9000);">383</span>
<span class="t" style="left:452.38px;top:24px;font-size:14.0px;line-height:14.0px;color:#000;transform:scaleX(0.9000);">383</span>
<span class="t" style="left:540.39px;top:24px;font-size:14.0px;line-height:14.0px;color:#000;transform:scaleX(0.9000);">0</span>
<div class="cb" style="left:582px;top:25px"></div>
<span class="t" style="left:31.39px;top:45px;font-size:14.0px;line-height:14.0px;color:#000;transform:scaleX(0.9000);">3</span>
<span class="t" style="left:81.39px;top:45px;font-size:14.0px;line-height:14.0px;color:#000;transform:scaleX(0.9000);">1</span>
<span class="t" style="left:130.87px;top:45px;font-size:14.0px;line-height:14.0px;color:#000;transform:scaleX(0.9000);">534,5</span>
<span class="t" style="left:204.87px;top:45px;font-size:14.0px;line-height:14.0px;color:#000;transform:scaleX(0.9000);">496,5</span>
<span class="t" style="left:363.37px;top:45px;font-size:14.0px;line-height:14.0px;color:#000;transform:scaleX(0.9000);">1900</span>
<span class="t" style="left:445.37px;top:45px;font-size:14.0px;line-height:14.0px;color:#000;transform:scaleX(0.9000);">1900</span>
<span class="t" style="left:540.39px;top:45px;font-size:14.0px;line-height:14.0px;color:#000;transform:scaleX(0.9000);">0</span>
<div class="cb" style="left:582px;top:46px"></div>
<span class="t" style="left:31.39px;top:66px;font-size:14.0px;line-height:14.0px;color:#000;transform:scaleX(0.9000);">4</span>
<span class="t" style="left:81.39px;top:66px;font-size:14.0px;line-height:14.0px;color:#000;transform:scaleX(0.9000);">1</span>
<span class="t" style="left:123.86px;top:66px;font-size:14.0px;line-height:14.0px;color:#000;transform:scaleX(0.9000);">649,00</span>
<span class="t" style="left:197.86px;top:66px;font-size:14.0px;line-height:14.0px;color:#000;transform:scaleX(0.9000);">848,00</span>
<span class="t" style="left:370.38px;top:66px;font-size:14.0px;line-height:14.0px;color:#000;transform:scaleX(0.9000);">953</span>
<span class="t" style="left:452.38px;top:66px;font-size:14.0px;line-height:14.0px;color:#000;transform:scaleX(0.9000);">953</span>
<span class="t" style="left:540.39px;top:66px;font-size:14.0px;line-height:14.0px;color:#000;transform:scaleX(0.9000);">0</span>
<div class="cb" style="left:582px;top:67px"></div>
<span class="t" style="left:31.39px;top:87px;font-size:14.0px;line-height:14.0px;color:#000;transform:scaleX(0.9000);">5</span>
<span class="t" style="left:81.39px;top:87px;font-size:14.0px;line-height:14.0px;color:#000;transform:scaleX(0.9000);">1</span>
<span class="t" style="left:123.86px;top:87px;font-size:14.0px;line-height:14.0px;color:#000;transform:scaleX(0.9000);">680,00</span>
<span class="t" style="left:190.85px;top:87px;font-size:14.0px;line-height:14.0px;color:#000;transform:scaleX(0.9000);">1437,00</span>
<span class="t" style="left:363.37px;top:87px;font-size:14.0px;line-height:14.0px;color:#000;transform:scaleX(0.9000);">2864</span>
<span class="t" style="left:445.37px;top:87px;font-size:14.0px;line-height:14.0px;color:#000;transform:scaleX(0.9000);">2864</span>
<span class="t" style="left:540.39px;top:87px;font-size:14.0px;line-height:14.0px;color:#000;transform:scaleX(0.9000);">0</span>
<div class="cb" style="left:582px;top:88px"></div>
<span class="t" style="left:31.39px;top:108px;font-size:14.0px;line-height:14.0px;color:#000;transform:scaleX(0.9000);">6</span>
<span class="t" style="left:81.39px;top:108px;font-size:14.0px;line-height:14.0px;color:#000;transform:scaleX(0.9000);">1</span>
<span class="t" style="left:130.87px;top:108px;font-size:14.0px;line-height:14.0px;color:#000;transform:scaleX(0.9000);">645,1</span>
<span class="t" style="left:204.87px;top:108px;font-size:14.0px;line-height:14.0px;color:#000;transform:scaleX(0.9000);">354,1</span>
<span class="t" style="left:363.37px;top:108px;font-size:14.0px;line-height:14.0px;color:#000;transform:scaleX(0.9000);">4280</span>
<span class="t" style="left:445.37px;top:108px;font-size:14.0px;line-height:14.0px;color:#000;transform:scaleX(0.9000);">4280</span>
<span class="t" style="left:540.39px;top:108px;font-size:14.0px;line-height:14.0px;color:#000;transform:scaleX(0.9000);">0</span>
<div class="cb" style="left:582px;top:109px"></div>
<span class="t" style="left:31.39px;top:129px;font-size:14.0px;line-height:14.0px;color:#000;transform:scaleX(0.9000);">7</span>
<span class="t" style="left:81.39px;top:129px;font-size:14.0px;line-height:14.0px;color:#000;transform:scaleX(0.9000);">1</span>
<span class="t" style="left:123.86px;top:129px;font-size:14.0px;line-height:14.0px;color:#000;transform:scaleX(0.9000);">848,00</span>
<span class="t" style="left:190.85px;top:129px;font-size:14.0px;line-height:14.0px;color:#000;transform:scaleX(0.9000);">1454,00</span>
<span class="t" style="left:370.38px;top:129px;font-size:14.0px;line-height:14.0px;color:#000;transform:scaleX(0.9000);">957</span>
<span class="t" style="left:452.38px;top:129px;font-size:14.0px;line-height:14.0px;color:#000;transform:scaleX(0.9000);">957</span>
<span class="t" style="left:540.39px;top:129px;font-size:14.0px;line-height:14.0px;color:#000;transform:scaleX(0.9000);">0</span>
<div class="cb" style="left:582px;top:130px"></div>
<span class="t" style="left:31.39px;top:150px;font-size:14.0px;line-height:14.0px;color:#000;transform:scaleX(0.9000);">8</span>
<span class="t" style="left:81.39px;top:150px;font-size:14.0px;line-height:14.0px;color:#000;transform:scaleX(0.9000);">1</span>
<span class="t" style="left:130.87px;top:150px;font-size:14.0px;line-height:14.0px;color:#000;transform:scaleX(0.9000);">848,1</span>
<span class="t" style="left:197.86px;top:150px;font-size:14.0px;line-height:14.0px;color:#000;transform:scaleX(0.9000);">649,00</span>
<span class="t" style="left:370.38px;top:150px;font-size:14.0px;line-height:14.0px;color:#000;transform:scaleX(0.9000);">957</span>
<span class="t" style="left:452.38px;top:150px;font-size:14.0px;line-height:14.0px;color:#000;transform:scaleX(0.9000);">957</span>
<span class="t" style="left:540.39px;top:150px;font-size:14.0px;line-height:14.0px;color:#000;transform:scaleX(0.9000);">0</span>
<div class="cb" style="left:582px;top:151px"></div>
<span class="t" style="left:31.39px;top:171px;font-size:14.0px;line-height:14.0px;color:#000;transform:scaleX(0.9000);">9</span>
<span class="t" style="left:81.39px;top:171px;font-size:14.0px;line-height:14.0px;color:#000;transform:scaleX(0.9000);">1</span>
<span class="t" style="left:130.87px;top:171px;font-size:14.0px;line-height:14.0px;color:#000;transform:scaleX(0.9000);">499,5</span>
<span class="t" style="left:197.86px;top:171px;font-size:14.0px;line-height:14.0px;color:#000;transform:scaleX(0.9000);">1964,5</span>
<span class="t" style="left:370.38px;top:171px;font-size:14.0px;line-height:14.0px;color:#000;transform:scaleX(0.9000);">955</span>
<span class="t" style="left:452.38px;top:171px;font-size:14.0px;line-height:14.0px;color:#000;transform:scaleX(0.9000);">955</span>
<span class="t" style="left:540.39px;top:171px;font-size:14.0px;line-height:14.0px;color:#000;transform:scaleX(0.9000);">0</span>
<div class="cb" style="left:582px;top:172px"></div>
<span class="t" style="left:24.38px;top:192px;font-size:14.0px;line-height:14.0px;color:#000;transform:scaleX(0.9000);">10</span>
<span class="t" style="left:81.39px;top:192px;font-size:14.0px;line-height:14.0px;color:#000;transform:scaleX(0.9000);">1</span>
<span class="t" style="left:123.86px;top:192px;font-size:14.0px;line-height:14.0px;color:#000;transform:scaleX(0.9000);">315,00</span>
<span class="t" style="left:190.85px;top:192px;font-size:14.0px;line-height:14.0px;color:#000;transform:scaleX(0.9000);">1999,00</span>
<span class="t" style="left:370.38px;top:192px;font-size:14.0px;line-height:14.0px;color:#000;transform:scaleX(0.9000);">240</span>
<span class="t" style="left:452.38px;top:192px;font-size:14.0px;line-height:14.0px;color:#000;transform:scaleX(0.9000);">240</span>
<span class="t" style="left:540.39px;top:192px;font-size:14.0px;line-height:14.0px;color:#000;transform:scaleX(0.9000);">0</span>
<div class="cb" style="left:582px;top:193px"></div>
<span class="t" style="left:25.32px;top:213px;font-size:14.0px;line-height:14.0px;color:#000;transform:scaleX(0.9000);">11</span>
<span class="t" style="left:81.39px;top:213px;font-size:14.0px;line-height:14.0px;color:#000;transform:scaleX(0.9000);">1</span>
<span class="t" style="left:116.85px;top:213px;font-size:14.0px;line-height:14.0px;color:#000;transform:scaleX(0.9000);">1008,00</span>
<span class="t" style="left:190.85px;top:213px;font-size:14.0px;line-height:14.0px;color:#000;transform:scaleX(0.9000);">1969,00</span>
<span class="t" style="left:370.38px;top:213px;font-size:14.0px;line-height:14.0px;color:#000;transform:scaleX(0.9000);">384</span>
<span class="t" style="left:452.38px;top:213px;font-size:14.0px;line-height:14.0px;color:#000;transform:scaleX(0.9000);">384</span>
<span class="t" style="left:540.39px;top:213px;font-size:14.0px;line-height:14.0px;color:#000;transform:scaleX(0.9000);">0</span>
<div class="cb" style="left:582px;top:214px"></div>
<span class="t" style="left:24.38px;top:234px;font-size:14.0px;line-height:14.0px;color:#000;transform:scaleX(0.9000);">12</span>
<span class="t" style="left:81.39px;top:234px;font-size:14.0px;line-height:14.0px;color:#000;transform:scaleX(0.9000);">1</span>
<span class="t" style="left:123.86px;top:234px;font-size:14.0px;line-height:14.0px;color:#000;transform:scaleX(0.9000);">504,00</span>
<span class="t" style="left:190.85px;top:234px;font-size:14.0px;line-height:14.0px;color:#000;transform:scaleX(0.9000);">1969,00</span>
<span class="t" style="left:370.38px;top:234px;font-size:14.0px;line-height:14.0px;color:#000;transform:scaleX(0.9000);">192</span>
<span class="t" style="left:452.38px;top:234px;font-size:14.0px;line-height:14.0px;color:#000;transform:scaleX(0.9000);">192</span>
<span class="t" style="left:540.39px;top:234px;font-size:14.0px;line-height:14.0px;color:#000;transform:scaleX(0.9000);">0</span>
<div class="cb" style="left:582px;top:235px"></div>
<span class="t" style="left:24.38px;top:255px;font-size:14.0px;line-height:14.0px;color:#000;transform:scaleX(0.9000);">13</span>
<span class="t" style="left:81.39px;top:255px;font-size:14.0px;line-height:14.0px;color:#000;transform:scaleX(0.9000);">1</span>
<span class="t" style="left:116.85px;top:255px;font-size:14.0px;line-height:14.0px;color:#000;transform:scaleX(0.9000);">2750,00</span>
<span class="t" style="left:197.86px;top:255px;font-size:14.0px;line-height:14.0px;color:#000;transform:scaleX(0.9000);">400,00</span>
<span class="t" style="left:377.38px;top:255px;font-size:14.0px;line-height:14.0px;color:#000;transform:scaleX(0.9000);">77</span>
<span class="t" style="left:459.38px;top:255px;font-size:14.0px;line-height:14.0px;color:#000;transform:scaleX(0.9000);">77</span>
<span class="t" style="left:540.39px;top:255px;font-size:14.0px;line-height:14.0px;color:#000;transform:scaleX(0.9000);">0</span>
<div class="cb" style="left:582px;top:256px"></div>
<span class="t" style="left:24.38px;top:276px;font-size:14.0px;line-height:14.0px;color:#000;transform:scaleX(0.9000);">14</span>
<span class="t" style="left:81.39px;top:276px;font-size:14.0px;line-height:14.0px;color:#000;transform:scaleX(0.9000);">1</span>
<span class="t" style="left:123.86px;top:276px;font-size:14.0px;line-height:14.0px;color:#000;transform:scaleX(0.9000);">520,00</span>
<span class="t" style="left:190.85px;top:276px;font-size:14.0px;line-height:14.0px;color:#000;transform:scaleX(0.9000);">1790,00</span>
<span class="t" style="left:370.38px;top:276px;font-size:14.0px;line-height:14.0px;color:#000;transform:scaleX(0.9000);">308</span>
<span class="t" style="left:452.38px;top:276px;font-size:14.0px;line-height:14.0px;color:#000;transform:scaleX(0.9000);">308</span>
<span class="t" style="left:540.39px;top:276px;font-size:14.0px;line-height:14.0px;color:#000;transform:scaleX(0.9000);">0</span>
<div class="cb" style="left:582px;top:277px"></div>
<span class="t" style="left:24.38px;top:297px;font-size:14.0px;line-height:14.0px;color:#000;transform:scaleX(0.9000);">15</span>
<span class="t" style="left:81.39px;top:297px;font-size:14.0px;line-height:14.0px;color:#000;transform:scaleX(0.9000);">1</span>
<span class="t" style="left:123.86px;top:297px;font-size:14.0px;line-height:14.0px;color:#000;transform:scaleX(0.9000);">620,00</span>
<span class="t" style="left:190.85px;top:297px;font-size:14.0px;line-height:14.0px;color:#000;transform:scaleX(0.9000);">1790,00</span>
<span class="t" style="left:377.38px;top:297px;font-size:14.0px;line-height:14.0px;color:#000;transform:scaleX(0.9000);">77</span>
<span class="t" style="left:459.38px;top:297px;font-size:14.0px;line-height:14.0px;color:#000;transform:scaleX(0.9000);">77</span>
<span class="t" style="left:540.39px;top:297px;font-size:14.0px;line-height:14.0px;color:#000;transform:scaleX(0.9000);">0</span>
<div class="cb" style="left:582px;top:298px"></div>
<span class="t" style="left:24.38px;top:318px;font-size:14.0px;line-height:14.0px;color:#000;transform:scaleX(0.9000);">16</span>
<span class="t" style="left:81.39px;top:318px;font-size:14.0px;line-height:14.0px;color:#000;transform:scaleX(0.9000);">1</span>
<span class="t" style="left:123.86px;top:318px;font-size:14.0px;line-height:14.0px;color:#000;transform:scaleX(0.9000);">682,00</span>
<span class="t" style="left:190.85px;top:318px;font-size:14.0px;line-height:14.0px;color:#000;transform:scaleX(0.9000);">2200,00</span>
<span class="t" style="left:370.38px;top:318px;font-size:14.0px;line-height:14.0px;color:#000;transform:scaleX(0.9000);">496</span>
<span class="t" style="left:452.38px;top:318px;font-size:14.0px;line-height:14.0px;color:#000;transform:scaleX(0.9000);">496</span>
<span class="t" style="left:540.39px;top:318px;font-size:14.0px;line-height:14.0px;color:#000;transform:scaleX(0.9000);">0</span>
<div class="cb" style="left:582px;top:319px"></div>
<span class="t" style="left:24.38px;top:339px;font-size:14.0px;line-height:14.0px;color:#000;transform:scaleX(0.9000);">17</span>
<span class="t" style="left:81.39px;top:339px;font-size:14.0px;line-height:14.0px;color:#000;transform:scaleX(0.9000);">0</span>
<span class="t" style="left:130.87px;top:339px;font-size:14.0px;line-height:14.0px;color:#000;transform:scaleX(0.9000);">172,8</span>
<span class="t" style="left:197.86px;top:339px;font-size:14.0px;line-height:14.0px;color:#000;transform:scaleX(0.9000);">649,00</span>
<span class="t" style="left:370.38px;top:339px;font-size:14.0px;line-height:14.0px;color:#000;transform:scaleX(0.9000);">316</span>
<span class="t" style="left:466.39px;top:339px;font-size:14.0px;line-height:14.0px;color:#000;transform:scaleX(0.9000);">0</span>
<span class="t" style="left:522.18px;top:339px;font-size:14.0px;line-height:14.0px;color:#000;transform:scaleX(0.9000);">-316</span>
<div class="cb" style="left:582px;top:340px"></div>
<span class="t" style="left:24.38px;top:360px;font-size:14.0px;line-height:14.0px;color:#000;transform:scaleX(0.9000);">18</span>
<span class="t" style="left:81.39px;top:360px;font-size:14.0px;line-height:14.0px;color:#000;transform:scaleX(0.9000);">0</span>
<span class="t" style="left:123.86px;top:360px;font-size:14.0px;line-height:14.0px;color:#000;transform:scaleX(0.9000);">132,00</span>
<span class="t" style="left:204.87px;top:360px;font-size:14.0px;line-height:14.0px;color:#000;transform:scaleX(0.9000);">354,1</span>
<span class="t" style="left:363.37px;top:360px;font-size:14.0px;line-height:14.0px;color:#000;transform:scaleX(0.9000);">1070</span>
<span class="t" style="left:466.39px;top:360px;font-size:14.0px;line-height:14.0px;color:#000;transform:scaleX(0.9000);">0</span>
<span class="t" style="left:515.17px;top:360px;font-size:14.0px;line-height:14.0px;color:#000;transform:scaleX(0.9000);">-1070</span>
<div class="cb" style="left:582px;top:361px"></div>
<span class="t" style="left:24.38px;top:381px;font-size:14.0px;line-height:14.0px;color:#000;transform:scaleX(0.9000);">19</span>
<span class="t" style="left:81.39px;top:381px;font-size:14.0px;line-height:14.0px;color:#000;transform:scaleX(0.9000);">0</span>
<span class="t" style="left:116.85px;top:381px;font-size:14.0px;line-height:14.0px;color:#000;transform:scaleX(0.9000);">2750,00</span>
<span class="t" style="left:204.87px;top:381px;font-size:14.0px;line-height:14.0px;color:#000;transform:scaleX(0.9000);">237,7</span>
<span class="t" style="left:384.39px;top:381px;font-size:14.0px;line-height:14.0px;color:#000;transform:scaleX(0.9000);">1</span>
<span class="t" style="left:466.39px;top:381px;font-size:14.0px;line-height:14.0px;color:#000;transform:scaleX(0.9000);">0</span>
<span class="t" style="left:536.20px;top:381px;font-size:14.0px;line-height:14.0px;color:#000;transform:scaleX(0.9000);">-1</span>
<div class="cb" style="left:582px;top:382px"></div>
<span class="t" style="left:24.38px;top:402px;font-size:14.0px;line-height:14.0px;color:#000;transform:scaleX(0.9000);">20</span>
<span class="t" style="left:81.39px;top:402px;font-size:14.0px;line-height:14.0px;color:#000;transform:scaleX(0.9000);">0</span>
<span class="t" style="left:130.87px;top:402px;font-size:14.0px;line-height:14.0px;color:#000;transform:scaleX(0.9000);">172,8</span>
<span class="t" style="left:190.85px;top:402px;font-size:14.0px;line-height:14.0px;color:#000;transform:scaleX(0.9000);">1454,00</span>
<span class="t" style="left:370.38px;top:402px;font-size:14.0px;line-height:14.0px;color:#000;transform:scaleX(0.9000);">319</span>
<span class="t" style="left:466.39px;top:402px;font-size:14.0px;line-height:14.0px;color:#000;transform:scaleX(0.9000);">0</span>
<span class="t" style="left:522.18px;top:402px;font-size:14.0px;line-height:14.0px;color:#000;transform:scaleX(0.9000);">-319</span>
<div class="cb" style="left:582px;top:403px"></div>
<span class="t" style="left:24.38px;top:423px;font-size:14.0px;line-height:14.0px;color:#000;transform:scaleX(0.9000);">21</span>
<span class="t" style="left:81.39px;top:423px;font-size:14.0px;line-height:14.0px;color:#000;transform:scaleX(0.9000);">0</span>
<span class="t" style="left:130.87px;top:423px;font-size:14.0px;line-height:14.0px;color:#000;transform:scaleX(0.9000);">172,5</span>
<span class="t" style="left:197.86px;top:423px;font-size:14.0px;line-height:14.0px;color:#000;transform:scaleX(0.9000);">649,00</span>
<span class="t" style="left:370.38px;top:423px;font-size:14.0px;line-height:14.0px;color:#000;transform:scaleX(0.9000);">319</span>
<span class="t" style="left:466.39px;top:423px;font-size:14.0px;line-height:14.0px;color:#000;transform:scaleX(0.9000);">0</span>
<span class="t" style="left:522.18px;top:423px;font-size:14.0px;line-height:14.0px;color:#000;transform:scaleX(0.9000);">-319</span>
<div class="cb" style="left:582px;top:424px"></div>
<span class="t" style="left:24.38px;top:444px;font-size:14.0px;line-height:14.0px;color:#000;transform:scaleX(0.9000);">22</span>
<span class="t" style="left:81.39px;top:444px;font-size:14.0px;line-height:14.0px;color:#000;transform:scaleX(0.9000);">0</span>
<span class="t" style="left:131.80px;top:444px;font-size:14.0px;line-height:14.0px;color:#000;transform:scaleX(0.9000);">116,4</span>
<span class="t" style="left:197.86px;top:444px;font-size:14.0px;line-height:14.0px;color:#000;transform:scaleX(0.9000);">848,00</span>
<span class="t" style="left:384.39px;top:444px;font-size:14.0px;line-height:14.0px;color:#000;transform:scaleX(0.9000);">1</span>
<span class="t" style="left:466.39px;top:444px;font-size:14.0px;line-height:14.0px;color:#000;transform:scaleX(0.9000);">0</span>
<span class="t" style="left:536.20px;top:444px;font-size:14.0px;line-height:14.0px;color:#000;transform:scaleX(0.9000);">-1</span>
<div class="cb" style="left:582px;top:445px"></div>
<span class="t" style="left:24.38px;top:465px;font-size:14.0px;line-height:14.0px;color:#000;transform:scaleX(0.9000);">23</span>
<span class="t" style="left:81.39px;top:465px;font-size:14.0px;line-height:14.0px;color:#000;transform:scaleX(0.9000);">0</span>
<span class="t" style="left:123.86px;top:465px;font-size:14.0px;line-height:14.0px;color:#000;transform:scaleX(0.9000);">1877,6</span>
<span class="t" style="left:197.86px;top:465px;font-size:14.0px;line-height:14.0px;color:#000;transform:scaleX(0.9000);">649,00</span>
<span class="t" style="left:384.39px;top:465px;font-size:14.0px;line-height:14.0px;color:#000;transform:scaleX(0.9000);">1</span>
<span class="t" style="left:466.39px;top:465px;font-size:14.0px;line-height:14.0px;color:#000;transform:scaleX(0.9000);">0</span>
<span class="t" style="left:536.20px;top:465px;font-size:14.0px;line-height:14.0px;color:#000;transform:scaleX(0.9000);">-1</span>
<div class="cb" style="left:582px;top:466px"></div>
<span class="t" style="left:24.38px;top:486px;font-size:14.0px;line-height:14.0px;color:#000;transform:scaleX(0.9000);">24</span>
<span class="t" style="left:81.39px;top:486px;font-size:14.0px;line-height:14.0px;color:#000;transform:scaleX(0.9000);">0</span>
<span class="t" style="left:130.87px;top:486px;font-size:14.0px;line-height:14.0px;color:#000;transform:scaleX(0.9000);">210,5</span>
<span class="t" style="left:197.86px;top:486px;font-size:14.0px;line-height:14.0px;color:#000;transform:scaleX(0.9000);">1964,5</span>
<span class="t" style="left:370.38px;top:486px;font-size:14.0px;line-height:14.0px;color:#000;transform:scaleX(0.9000);">191</span>
<span class="t" style="left:466.39px;top:486px;font-size:14.0px;line-height:14.0px;color:#000;transform:scaleX(0.9000);">0</span>
<span class="t" style="left:522.18px;top:486px;font-size:14.0px;line-height:14.0px;color:#000;transform:scaleX(0.9000);">-191</span>
<div class="cb" style="left:582px;top:487px"></div>
</div>
<svg class="ov" style="left:1226px;top:457px" width="8" height="13"><path d="M1 1.500L6.300 6.300L1 11z" fill="#000"/></svg>
<div class="r" style="left:1903px;top:431px;width:17px;height:518px;background:#f8f8f8;"></div>
<div class="r" style="left:1903px;top:431px;width:17px;height:18px;background:#f0f0f0;border:1px solid #000;box-shadow:inset 1px 1px 0 #fff;box-sizing:border-box;"></div>
<div class="r" style="left:1903px;top:448px;width:17px;height:370px;background:#f0f0f0;border:1px solid #000;box-shadow:inset 1px 1px 0 #fff;box-sizing:border-box;"></div>
<div class="r" style="left:1903px;top:931px;width:17px;height:18px;background:#f0f0f0;border:1px solid #000;box-shadow:inset 1px 1px 0 #fff;box-sizing:border-box;"></div>
<svg class="ov" style="left:1903px;top:432px" width="17" height="516"><path d="M5 11h8l-4-4.500zM5 505.500h8l-4 4.500z" fill="#000"/></svg>
<div class="r" style="left:1223px;top:948px;width:680px;height:17px;background:#f8f8f8;"></div>
<div class="r" style="left:1903px;top:949px;width:17px;height:16px;background:#f0f0f0;"></div>
<div class="r" style="left:1223px;top:948px;width:18px;height:17px;background:#f0f0f0;border:1px solid #000;box-shadow:inset 1px 1px 0 #fff;box-sizing:border-box;"></div>
<div class="r" style="left:1240px;top:948px;width:274px;height:17px;background:#f0f0f0;border:1px solid #000;box-shadow:inset 1px 1px 0 #fff;box-sizing:border-box;"></div>
<div class="r" style="left:1886px;top:948px;width:17px;height:17px;background:#f0f0f0;border:1px solid #000;box-shadow:inset 1px 1px 0 #fff;box-sizing:border-box;"></div>
<svg class="ov" style="left:1223px;top:948px" width="697" height="17"><path d="M11.200 4v9.200l-5.400-4.600zM670 4v9.200l5.400-4.600z" fill="#000"/></svg>
<div class="r" style="left:1220px;top:965px;width:700px;height:48px;background:#f0f0f0;"></div>
<div class="r" style="left:1239px;top:968px;width:11px;height:11px;background:#fff;border:1px solid #222;box-sizing:border-box;"></div>
<div class="r" style="left:1334px;top:968px;width:11px;height:11px;background:#c0dcc0;border:1px solid #222;box-sizing:border-box;"></div>
<div class="r" style="left:1239px;top:981px;width:11px;height:11px;background:#ffff00;border:1px solid #222;box-sizing:border-box;"></div>
<div class="r" style="left:1334px;top:981px;width:11px;height:11px;background:#ff0000;border:1px solid #222;box-sizing:border-box;"></div>
<span class="t" style="left:1261.20px;top:969px;font-size:11.2px;line-height:11.2px;color:#000;transform:scaleX(1.1351);">Standard</span>
<span class="t" style="left:1355.20px;top:969px;font-size:11.2px;line-height:11.2px;color:#000;transform:scaleX(1.0286);">CAM</span>
<span class="t" style="left:1261.20px;top:982px;font-size:11.2px;line-height:11.2px;color:#000;transform:scaleX(1.1484);">Sfrido</span>
<span class="t" style="left:1355.20px;top:982px;font-size:11.2px;line-height:11.2px;color:#000;transform:scaleX(1.1711);">Rim. &gt; 0</span>
<div class="r" style="left:1234px;top:996px;width:686px;height:1px;background:#a0a0a0;"></div>
<div class="r" style="left:1234px;top:997px;width:686px;height:1px;background:#fafafa;"></div>
<span class="t" style="left:1238.60px;top:999px;font-size:10.0px;line-height:10.0px;color:#000;transform:scaleX(1.0943);">X : 3184,00 Y : 1693,00</span>
<div class="r" style="left:0px;top:1013px;width:1920px;height:19px;background:#f0f0f0;"></div>
<div class="r" style="left:0px;top:1015px;width:17px;height:17px;background:#f0f0f0;border-left:1px solid #a0a0a0;border-top:1px solid #a0a0a0;border-right:1px solid #fff;border-bottom:1px solid #fff;box-sizing:border-box;"></div>
<div class="r" style="left:20px;top:1015px;width:97px;height:17px;background:#f0f0f0;border-left:1px solid #a0a0a0;border-top:1px solid #a0a0a0;border-right:1px solid #fff;border-bottom:1px solid #fff;box-sizing:border-box;"></div>
<div class="r" style="left:120px;top:1015px;width:57px;height:17px;background:#f0f0f0;border-left:1px solid #a0a0a0;border-top:1px solid #a0a0a0;border-right:1px solid #fff;border-bottom:1px solid #fff;box-sizing:border-box;"></div>
<div class="r" style="left:180px;top:1015px;width:127px;height:17px;background:#f0f0f0;border-left:1px solid #a0a0a0;border-top:1px solid #a0a0a0;border-right:1px solid #fff;border-bottom:1px solid #fff;box-sizing:border-box;"></div>
<div class="r" style="left:310px;top:1015px;width:617px;height:17px;background:#f0f0f0;border-left:1px solid #a0a0a0;border-top:1px solid #a0a0a0;border-right:1px solid #fff;border-bottom:1px solid #fff;box-sizing:border-box;"></div>
<div class="r" style="left:930px;top:1015px;width:247px;height:17px;background:#f0f0f0;border-left:1px solid #a0a0a0;border-top:1px solid #a0a0a0;border-right:1px solid #fff;border-bottom:1px solid #fff;box-sizing:border-box;"></div>
<div class="r" style="left:1180px;top:1015px;width:740px;height:17px;background:#f0f0f0;border-left:1px solid #a0a0a0;border-top:1px solid #a0a0a0;border-right:1px solid #fff;border-bottom:1px solid #fff;box-sizing:border-box;"></div>
<span class="t" style="left:121.40px;top:1019px;font-size:11.2px;line-height:11.2px;color:#000;transform:scaleX(0.9584);">Pwd : 0</span>
<span class="t" style="left:181.60px;top:1019px;font-size:11.2px;line-height:11.2px;color:#000;transform:scaleX(0.9905);">V : 25.03.002</span>
<span class="t" style="left:317.00px;top:1019px;font-size:11.2px;line-height:11.2px;color:#000;transform:scaleX(0.9763);">Key: 0</span>
<span class="t" style="left:360.50px;top:1019px;font-size:11.2px;line-height:11.2px;color:#000;transform:scaleX(0.9454);">NetKey: False</span>
<span class="t" style="left:440.50px;top:1019px;font-size:11.2px;line-height:11.2px;color:#000;transform:scaleX(0.9921);"># Key:</span>
<span class="t" style="left:487.00px;top:1019px;font-size:11.2px;line-height:11.2px;color:#000;transform:scaleX(0.9385);">FF2E78000000000010000000AC7B63FDFB4379ED5BFFFEFFDA00004</span>
<span class="t" style="left:932.00px;top:1019px;font-size:11.2px;line-height:11.2px;color:#000;transform:scaleX(0.9459);">Standard</span>
<span class="t" style="left:1815.00px;top:1019px;font-size:11.2px;line-height:11.2px;color:#000;">2025-10-28 17:11:24</span>
<svg class="ov" width="1920" height="1032" viewBox="0 0 1920 1032" fill="none" stroke-linecap="round" stroke-linejoin="round">
<g stroke="none"><rect x="6.500" y="3.200" width="9.700" height="10.500" fill="#f2c4bc"/><rect x="4" y="3" width="3" height="11.800" rx=".8" fill="#cc1a24"/><rect x="7.300" y="4" width="2.600" height="2.300" fill="#d8503e"/><rect x="10.800" y="3.400" width="2" height="2.400" fill="#e06a58"/><path d="M14 3.200l1.800 1v3.500l-.8 1.600z" fill="#d8404a"/><rect x="8.200" y="8.200" width="2.600" height="2.500" fill="#d8503e"/><rect x="12" y="8.900" width="1.900" height="1" fill="#e2806e"/><rect x="7" y="12" width="9" height="2.600" fill="#e28a76"/><rect x="4.800" y="14.600" width="2.300" height="3.400" rx=".8" fill="#dc4a58"/><rect x="7.800" y="15.300" width="1.300" height="2.600" rx=".6" fill="#d23444"/><rect x="10" y="13" width="1.200" height="5.800" fill="#f4bcc2"/><path d="M12 15.200l2.500-1.300l1.600.6v3.200l-1.500 1.200l-2.600-1.500z" fill="#c8141e"/></g>
<g stroke="#111" stroke-width="1"><path d="M1799 10.500h10"/><rect x="1844.500" y="7.500" width="7" height="7" rx="1.300"/><path d="M1846.500 5.500h5a2 2 0 0 1 2 2v5" /><path d="M1890.300 5.300l9.600 9.600M1899.900 5.300l-9.600 9.600"/></g>
<g stroke="#c8882a" stroke-width="1.5"><rect x="22.800" y="66.600" width="32.600" height="28.400" rx="2.500"/><path d="M31 67c3 4.500 13 4.800 18 0M25.500 67c5 9.500 22 10.500 29.500 3.500M23 73.500c9 7 22 7.500 32.500 1.500M23 78.500c8 1 12.500 5 15.500 9.500s6 6.500 9 7M33 80.500c6 2 9 6 12 9.500s6.500 4.500 10 4.500M42 81.500c4 2.500 8 6 13.500 7.500M55.500 80.500c-3.500 1-6.500 2.500-8.500 4.500M55.500 85l-4.500 2M23 84c4.500.5 8 3 9.500 6.500s1 3.500 1.500 4.500M23 89.500c2.500 0 5 2 5.500 5.500"/></g>
<g fill="#e96b2c" stroke="none"><rect x="22" y="155.700" width="35.500" height="4.200"/><rect x="22" y="155.700" width="4.200" height="29.700"/>
<rect x="53.3" y="162.7" width="4.200" height="3.700"/>
<rect x="53.3" y="169" width="4.200" height="3.700"/>
<rect x="53.3" y="175.3" width="4.200" height="3.700"/>
<rect x="53.3" y="181.7" width="4.200" height="3.700"/>
<rect x="30" y="181.7" width="4.200" height="3.700"/>
<rect x="37.6" y="181.7" width="4.200" height="3.700"/>
<rect x="45.6" y="181.7" width="4.200" height="3.700"/>
</g>
<g stroke="#8cc63f" stroke-width="1.800"><path d="M38.700 245.300L55 253.200V268.500L38.700 276.500L22.500 268.500V253.200zM22.500 253.200L38.700 261.200L55 253.200M38.700 261.200V276.500M30.500 249.200L47 257.200V262.500"/></g>
<g stroke="#d6eeea" stroke-width="1.500"><rect x="23.400" y="336.400" width="32.500" height="6.800" rx=".8"/><rect x="23.400" y="347.600" width="32.500" height="6.800" rx=".8"/><rect x="23.400" y="358.600" width="32.500" height="6.800" rx=".8"/></g>
<g stroke="#def4f1" stroke-width="1.500"><path d="M26.800 443.200V428a3 3 0 0 1 3-3h15.300a3 3 0 0 1 3 3v15.200"/><rect x="22.800" y="443.200" width="33.600" height="4.600" rx="2.300"/><path d="M31 429.500v9.500M34.900 429.500v9.500M38.700 429.500v9.500M42.700 429.500v9.500"/><path d="M26.800 448v6.500a2.700 2.700 0 0 0 5.400 0V448M35 448v2a2.500 2.500 0 0 0 5 0v-2M42.700 448v2a2.500 2.500 0 0 0 5 0v-2"/></g>
<g stroke="#d6eeea" stroke-width="1.600">
<rect x="23.8" y="516" width="8" height="8" rx=".8"/>
<rect x="34.2" y="516" width="9" height="8" rx=".8"/>
<rect x="45.6" y="516" width="9.6" height="8" rx=".8"/>
<rect x="23.8" y="527.2" width="19.4" height="7.6" rx=".8"/>
<rect x="45.6" y="527.2" width="9.6" height="17.8" rx=".8"/>
<rect x="23.8" y="537.6" width="8" height="7.4" rx=".8"/>
<rect x="34.2" y="537.6" width="9" height="7.4" rx=".8"/>
</g>
<g stroke="#2bb7dc" stroke-width="1.600"><rect x="25.800" y="606.900" width="27.700" height="26.800"/>
<rect x="23" y="604.1" width="5.600" height="5.600" fill="#58585a"/>
<rect x="50.7" y="604.1" width="5.600" height="5.600" fill="#58585a"/>
<rect x="23" y="630.9" width="5.600" height="5.600" fill="#58585a"/>
<rect x="50.7" y="630.9" width="5.600" height="5.600" fill="#58585a"/>
<path d="M31.500 629.500l2-6.500L45 611.500a2.800 2.800 0 0 1 4 4L37.500 627zM33.500 623l4 4M43.500 613l4 4" stroke-width="1.400"/></g>
<g stroke="#f5b81c" stroke-width="1.700"><rect x="22.100" y="696" width="35" height="29"/><path d="M26.300 713.300c6-9 20.500-9 26.300 0c-5.800 9-20.300 9-26.300 0z"/><circle cx="39.400" cy="713.300" r="4.300"/><path d="M39.400 699.300v4M31.200 702.300l2.300 3.200M47.600 702.300l-2.300 3.200"/></g>
<g stroke="#dcfafa" stroke-width="1.600">
<path d="M145 64.100h10.200a3 3 0 0 1 3 3v20.800a3 3 0 0 1-3 3h-14.400a3 3 0 0 1-3-3V71.300zM145 64.100v4.200a3 3 0 0 1-3 3h-4.200"/>
<path d="M241.300 88.500V67a2.600 2.600 0 0 1 2.600-2.600h5.800a2.600 2.600 0 0 1 2.200 1.200l1.500 2.300h13.200a2.600 2.600 0 0 1 2.600 2.600v4M241.300 88.500l4.600-12.500a2.600 2.600 0 0 1 2.400-1.700h21.700a1.800 1.800 0 0 1 1.700 2.400l-4.400 12.500a2.600 2.600 0 0 1-2.400 1.700h-21a2.600 2.600 0 0 1-2.600-2.400z"/>
<path d="M304.500 64.100h18.300l6 6v18.200a2.700 2.700 0 0 1-2.700 2.700h-21.600a2.700 2.700 0 0 1-2.700-2.700V66.800a2.700 2.700 0 0 1 2.700-2.700zM310 64.300v6.400h10.600v-6.400M306.800 90.800v-8.800a2.300 2.300 0 0 1 2.300-2.300h12.400a2.300 2.300 0 0 1 2.300 2.300v8.800"/>
<rect x="380.800" y="71.800" width="27.600" height="14.600" rx="3.600"/><path d="M386.400 71.600v-5.500a2 2 0 0 1 2-2h12.400a2 2 0 0 1 2 2v5.500M386.400 86.600v4.200h16.400v-4.200"/><path d="M384.800 80.300h19.600" stroke-width="2.400"/>
<path d="M471.500 65.300l25.600 25M497.100 65.300l-25.600 25" stroke-width="3.3"/>
<path d="M755 72.500v-4.800a3.800 3.800 0 0 1 3.800-3.800h11.700a3.800 3.800 0 0 1 3.800 3.800v19.800a3.800 3.800 0 0 1-3.800 3.800h-11.700a3.800 3.800 0 0 1-3.800-3.800v-4.800M766.500 77.500h-18.700M752.500 72.700l-4.800 4.800l4.800 4.800"/>
</g>
<g fill="#000" stroke="none"><path d="M210.300 86.200h5.800l-2.900 3z"/><path d="M445.500 86.200h5.800l-2.900 3z"/></g>
<path d="M672.500 64.600L694.400 79L672.500 93.500z" fill="#3fa52b" stroke="none"/>
<g stroke-linejoin="miter" stroke-linecap="butt"><path transform="translate(1 1)" d="M578.600 63.600L593.300 70.900V84L578.600 91.700L564.700 84V70.900zM564.700 70.900L578.600 78.200L593.300 70.900M578.600 78.200V91.700M571.600 67.200L586 74.500V79.500" stroke="#f4f4f4" stroke-width="3.200" stroke-dasharray="1.300 1.100"/><path d="M578.600 63.600L593.300 70.900V84L578.600 91.700L564.700 84V70.900zM564.700 70.900L578.600 78.200L593.300 70.900M578.600 78.200V91.700M571.600 67.200L586 74.500V79.500" stroke="#a2a2a2" stroke-width="3.300"/></g>
<rect x="583" y="82.200" width="16" height="14.800" fill="#fafafa" stroke="none"/>
<rect x="582" y="81.200" width="16" height="14.800" fill="#a2a2a2" stroke="none"/><path d="M589.600 84v8M587 89.800l2.600 2.600l2.600-2.600" stroke="#f0f0f0" stroke-width="1.100" stroke-dasharray="2.500 .6"/>
<g stroke="#0d4a80" stroke-width="2.2">
<path d="M100 142V154.600a1.700 1.700 0 0 0 2.900 1.200L105.800 152.800L108.700 158.400a2.200 2.200 0 0 0 4-1.900L110.200 151.300L114 150.800a2.100 2.100 0 0 0 2.100-3.300M105 139.100L111.800 144.500"/>
<circle cx="100.800" cy="137.200" r="3" fill="#ff4fe3" stroke="none"/>
<path d="M151.200 134.600a1.300 1.300 0 0 1 2.500-.5L161 148.400H151.200z"/><path d="M151.200 152.200H167.200L151.200 162.200z" fill="#b4e0b4"/>
<rect x="202.5" y="135" width="8.800" height="9" rx="1.300" fill="#8fb6f2" stroke-width="2"/>
<rect x="215.7" y="135" width="8.800" height="9" rx="1.300" fill="#8fb6f2" stroke-width="2"/>
<rect x="202.5" y="149" width="8.800" height="9" rx="1.300" fill="#f99090" stroke-width="2"/>
<rect x="215.7" y="149" width="8.800" height="9" rx="1.300" fill="#8fb6f2" stroke-width="2"/>
<path d="M244.100 158V147.700a10.550 10.550 0 0 1 21.100 0V158H259.700V147.700a5.050 5.050 0 0 0-10.100 0V158zM244.100 152h5.500M259.700 152h5.500" stroke-width="2"/>
<g transform="translate(301.270 143.200) rotate(45)"><path d="M-8.900 8.300V0a8.900 8.900 0 0 1 17.800 0V8.300H4.300V0a4.300 4.300 0 0 0-8.600 0V8.300zM-8.900 3h4.600M4.300 3h4.600" stroke-width="2"/></g>
<path d="M287.300 152.600Q288.500 156.300 292.400 157.400M290.500 151.600Q291.200 153.600 293.200 154.200" stroke-width="1.800"/>
<circle cx="336" cy="144.800" r="8.600"/><path d="M342.300 151.200l7 7M336 140.300v9M331.500 144.800h9"/>
<circle cx="379" cy="144.800" r="8.600"/><path d="M385.300 151.200l7 7"/>
</g>
<g fill="#000" stroke="none">
<path d="M127.3 146h6l-3 3.200z"/>
<path d="M181.3 146h6l-3 3.200z"/>
<path d="M536 146h6l-3 3.200z"/>
<path d="M633.3 146h6l-3 3.200z"/>
</g>
<g stroke="#9c9c9c" stroke-width="2.500"><path d="M421.500 135.400h12.300a2 2 0 0 1 2 2v12M427.500 160.200h-9a2 2 0 0 1-2-2v-17.300l5.500-5.500v3.600a1.700 1.700 0 0 1-1.700 1.700h-3.600"/>
<path d="M468 135.400h12.300a2 2 0 0 1 2 2v12M474 160.200h-11M463 160.200v-19.300l5.500-5.500v3.600a1.700 1.700 0 0 1-1.700 1.700h-3.600M463 160.200h-3.600a1.800 1.800 0 0 1-1.800-1.800v-17.500l3.400-3.400"/></g>
<circle cx="433.9" cy="155.800" r="6.600" fill="#9c9c9c" stroke="#e4e4e4" stroke-width=".8"/><path d="M430.6 156.200l2.300 2.500l4.200-4.600" stroke="#f0f0f0" stroke-width="1.200"/>
<circle cx="477.3" cy="155.800" r="6.600" fill="#9c9c9c" stroke="#e4e4e4" stroke-width=".8"/><path d="M474 156.200l2.300 2.500l4.200-4.600" stroke="#f0f0f0" stroke-width="1.200"/>
<g stroke="none">
<rect x="500.30" y="136.10" width="10.80" height="4.60" rx=".9" fill="#0c4a8c"/><rect x="513.20" y="136.10" width="11.50" height="4.60" rx=".9" fill="#0c4a8c"/><rect x="500.30" y="142.00" width="5.30" height="4.60" rx=".9" fill="#0c4a8c"/><rect x="507.50" y="142.00" width="10.40" height="4.60" rx=".9" fill="#0c4a8c"/><rect x="519.80" y="142.00" width="4.90" height="4.60" rx=".9" fill="#0c4a8c"/><rect x="500.30" y="147.90" width="10.80" height="4.60" rx=".9" fill="#0c4a8c"/><rect x="513.20" y="147.90" width="11.50" height="4.60" rx=".9" fill="#0c4a8c"/><rect x="500.30" y="153.80" width="5.30" height="4.60" rx=".9" fill="#0c4a8c"/><rect x="507.50" y="153.80" width="10.40" height="4.60" rx=".9" fill="#0c4a8c"/><rect x="519.80" y="153.80" width="4.90" height="4.60" rx=".9" fill="#0c4a8c"/>
<rect x="554.70" y="136.10" width="10.80" height="4.60" rx=".9" fill="#ff2323"/><rect x="567.60" y="136.10" width="11.50" height="4.60" rx=".9" fill="#0c4a8c"/><rect x="554.70" y="142.00" width="5.30" height="4.60" rx=".9" fill="#0c4a8c"/><rect x="561.90" y="142.00" width="10.40" height="4.60" rx=".9" fill="#0c4a8c"/><rect x="574.20" y="142.00" width="4.90" height="4.60" rx=".9" fill="#0c4a8c"/><rect x="554.70" y="147.90" width="10.80" height="4.60" rx=".9" fill="#0c4a8c"/><rect x="567.60" y="147.90" width="11.50" height="4.60" rx=".9" fill="#0c4a8c"/><rect x="554.70" y="153.80" width="5.30" height="4.60" rx=".9" fill="#0c4a8c"/><rect x="561.90" y="153.80" width="10.40" height="4.60" rx=".9" fill="#0c4a8c"/><rect x="574.20" y="153.80" width="4.90" height="4.60" rx=".9" fill="#0c4a8c"/>
<rect x="597.00" y="136.10" width="10.80" height="4.60" rx=".9" fill="#0c4a8c"/><rect x="609.90" y="136.10" width="11.50" height="4.60" rx=".9" fill="#0c4a8c"/><rect x="597.00" y="142.00" width="5.30" height="4.60" rx=".9" fill="#0c4a8c"/><rect x="604.20" y="142.00" width="10.40" height="4.60" rx=".9" fill="#0c4a8c"/><rect x="616.50" y="142.00" width="4.90" height="4.60" rx=".9" fill="#0c4a8c"/><rect x="597.00" y="147.90" width="10.80" height="4.60" rx=".9" fill="#0c4a8c"/><rect x="609.90" y="147.90" width="11.50" height="4.60" rx=".9" fill="#0c4a8c"/><rect x="597.00" y="153.80" width="5.30" height="4.60" rx=".9" fill="#0c4a8c"/><rect x="604.20" y="153.80" width="10.40" height="4.60" rx=".9" fill="#0c4a8c"/><rect x="616.50" y="153.80" width="4.90" height="4.60" rx=".9" fill="#0c4a8c"/>
<rect x="651.40" y="136.10" width="10.80" height="4.60" rx=".9" fill="#ff2323"/><rect x="664.30" y="136.10" width="11.50" height="4.60" rx=".9" fill="#0c4a8c"/><rect x="651.40" y="142.00" width="5.30" height="4.60" rx=".9" fill="#0c4a8c"/><rect x="658.60" y="142.00" width="10.40" height="4.60" rx=".9" fill="#0c4a8c"/><rect x="670.90" y="142.00" width="4.90" height="4.60" rx=".9" fill="#0c4a8c"/><rect x="651.40" y="147.90" width="10.80" height="4.60" rx=".9" fill="#0c4a8c"/><rect x="664.30" y="147.90" width="11.50" height="4.60" rx=".9" fill="#0c4a8c"/><rect x="651.40" y="153.80" width="5.30" height="4.60" rx=".9" fill="#0c4a8c"/><rect x="658.60" y="153.80" width="10.40" height="4.60" rx=".9" fill="#0c4a8c"/><rect x="670.90" y="153.80" width="4.90" height="4.60" rx=".9" fill="#0c4a8c"/>
<rect x="705.20" y="136.10" width="10.80" height="4.60" rx=".9" fill="#3fa52b"/><rect x="718.10" y="136.10" width="11.50" height="4.60" rx=".9" fill="#3fa52b"/><rect x="705.20" y="142.00" width="5.30" height="4.60" rx=".9" fill="#3fa52b"/><rect x="712.40" y="142.00" width="10.40" height="4.60" rx=".9" fill="#3fa52b"/><rect x="724.70" y="142.00" width="4.90" height="4.60" rx=".9" fill="#3fa52b"/><rect x="705.20" y="147.90" width="10.80" height="4.60" rx=".9" fill="#3fa52b"/><rect x="718.10" y="147.90" width="11.50" height="4.60" rx=".9" fill="#3fa52b"/><rect x="705.20" y="153.80" width="5.30" height="4.60" rx=".9" fill="#3fa52b"/><rect x="712.40" y="153.80" width="10.40" height="4.60" rx=".9" fill="#3fa52b"/><rect x="724.70" y="153.80" width="4.90" height="4.60" rx=".9" fill="#3fa52b"/>
</g>
<circle cx="617.5" cy="153.600" r="6.600" fill="#b81f2d" stroke="none"/><path d="M614.3 150.400l6.400 6.400M620.7 150.400l-6.400 6.400" stroke="#fff" stroke-width="1.400" stroke-linecap="butt"/>
<circle cx="671" cy="153.600" r="6.600" fill="#b81f2d" stroke="none"/><path d="M667.8 150.400l6.400 6.400M674.2 150.400l-6.400 6.400" stroke="#fff" stroke-width="1.400" stroke-linecap="butt"/>
</svg>
</body></html>
